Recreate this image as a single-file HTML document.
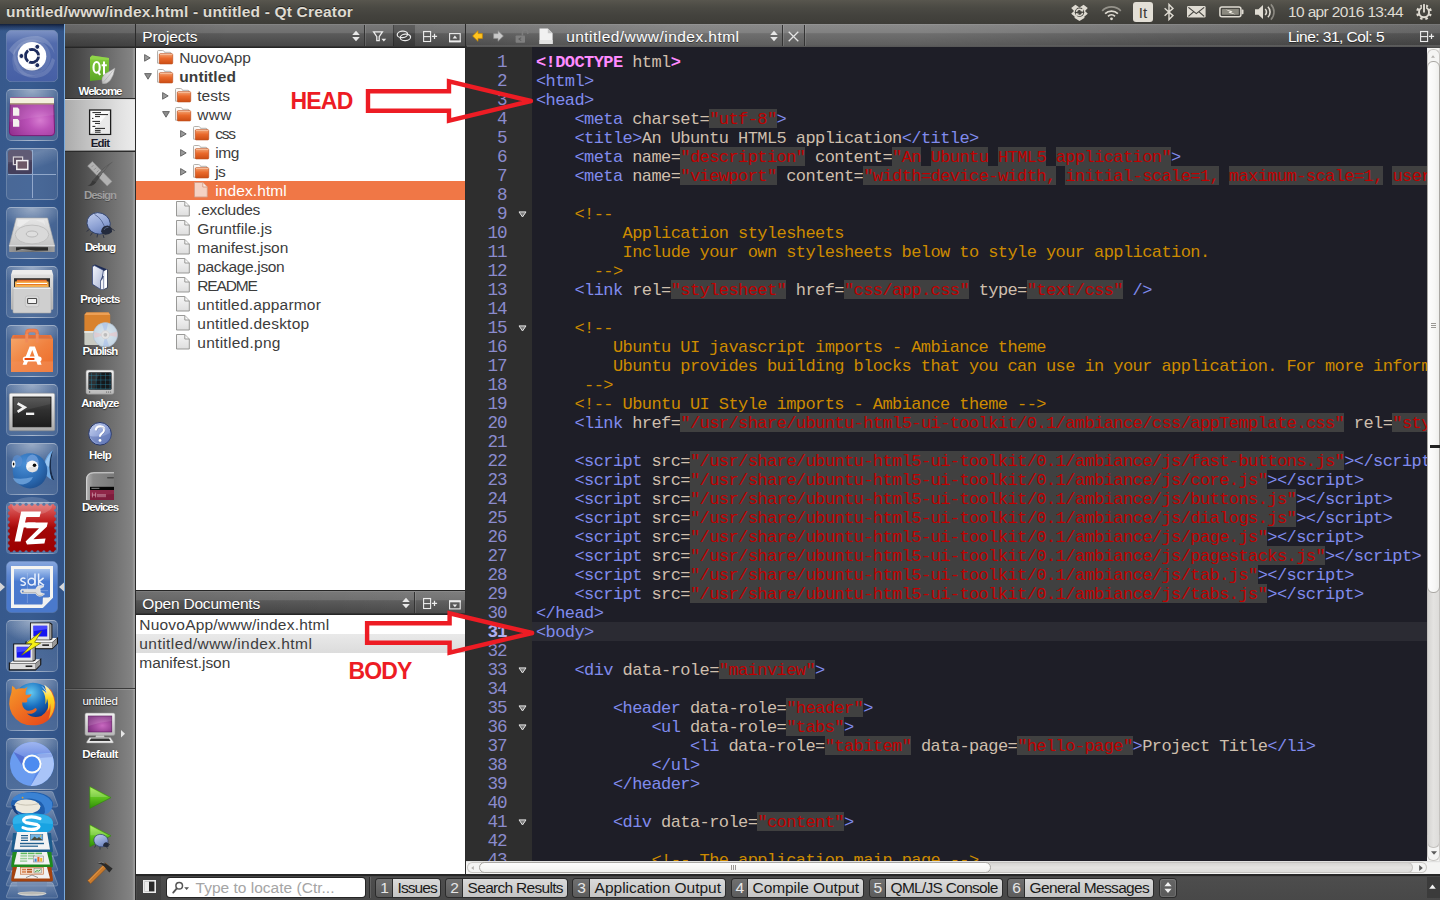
<!DOCTYPE html>
<html><head><meta charset="utf-8"><title>Qt Creator</title>
<style>

html,body{margin:0;padding:0;}
body{width:1440px;height:900px;overflow:hidden;position:relative;background:#1e1e27;font-family:"Liberation Sans",sans-serif;}
.abs{position:absolute;}
.t{position:absolute;white-space:pre;line-height:1;font-family:"Liberation Sans",sans-serif;}
svg{position:absolute;overflow:visible;}
/* top panel */
#panel{position:absolute;left:0;top:0;width:1440px;height:24px;background:linear-gradient(#58564e 0,#4b4a44 30%,#43423d 65%,#3e3d38 100%);}
/* launcher */
#launcher{position:absolute;left:0;top:24px;width:64px;height:876px;background:linear-gradient(90deg,#37598c 0,#385b8f 45%,#34568a 80%,#315285 100%);}
#launcher:before{content:"";position:absolute;left:0;top:0;width:64px;height:7px;background:linear-gradient(rgba(16,28,54,.95),rgba(20,36,70,.55) 40%,rgba(30,50,90,0));}
#lline{position:absolute;left:64px;top:24px;width:1px;height:876px;background:#79aadd;}
.tile{position:absolute;left:6px;width:52px;height:52px;border-radius:5px;box-sizing:border-box;
  background:radial-gradient(ellipse 62% 42% at 50% 0%,rgba(255,255,255,.42),rgba(255,255,255,.10) 75%,rgba(255,255,255,0) 100%),linear-gradient(rgba(255,255,255,.13) 0,rgba(255,255,255,.09) 40%,rgba(255,255,255,.12) 100%);
  border:1px solid rgba(255,255,255,.17);border-top-color:rgba(255,255,255,.45);}
/* qt toolbars */
.tb{position:absolute;height:24px;top:24px;background:linear-gradient(#8c8c8c 0,#787878 5%,#6f6f6f 38%,#5b5b5b 40%,#474747 92%,#262626 95%,#262626 100%);}
.tbsep{position:absolute;top:25px;width:1px;height:21px;background:#333;box-shadow:1px 0 0 rgba(255,255,255,.12);}

#code .ln{position:absolute;left:0;width:39.7px;height:19px;line-height:19px;text-align:right;font-family:"Liberation Mono",monospace;font-size:17.6px;letter-spacing:-0.94px;color:#8b8bcd;white-space:pre;padding-top:1.1px;box-sizing:border-box;}
#code .cl{position:absolute;left:69px;height:19px;line-height:19px;font-family:"Liberation Mono",monospace;font-size:17px;letter-spacing:-0.58px;color:#cfbfad;white-space:pre;}
#code .cl span{display:inline-block;height:19px;line-height:21px;vertical-align:top;}
#code .cl span.s{background:#404040;color:#c00000;}

</style></head>
<body>
<div id="panel"></div>
<span class="t" style="left:6.00px;top:3.88px;font-size:15.5px;font-weight:700;color:#dfdbd2;letter-spacing:0.183px;text-shadow:0 -1px 0 rgba(0,0,0,.5);">untitled/www/index.html - untitled - Qt Creator</span>
<svg style="left:1069.5px;top:4px" width="19" height="18" viewBox="0 0 19 18">
<path d="M1.2 4 L5.4 0.8 L9.5 3.4 L13.6 0.8 L17.8 4 L15 6.9 L17.8 9.8 L14.4 12.4 L14.4 14 L9.5 16.9 L4.6 14 L4.6 12.4 L1.2 9.8 L4 6.9Z" fill="#dfdbd2"/>
<circle cx="9.5" cy="8.3" r="4.7" fill="#45443f"/>
<path d="M6.4 7.8 A3.2 3.2 0 0 1 11.9 6.2" fill="none" stroke="#dfdbd2" stroke-width="1.5"/><path d="M13.3 4.3 L13.1 7.7 L10 6.9Z" fill="#dfdbd2"/>
<path d="M12.6 8.9 A3.2 3.2 0 0 1 7.1 10.5" fill="none" stroke="#dfdbd2" stroke-width="1.5"/><path d="M5.7 12.4 L5.9 9 L9 9.8Z" fill="#dfdbd2"/>
</svg>
<svg style="left:1101px;top:4px" width="21" height="17" viewBox="0 0 21 17" fill="none" stroke="#dfdbd2" stroke-linecap="butt">
<path d="M1.2 6.8 A13 13 0 0 1 19.8 6.8" stroke-width="1.7" opacity=".5"/>
<path d="M4.1 9.7 A9 9 0 0 1 16.9 9.7" stroke-width="1.7"/>
<path d="M7 12.4 A5 5 0 0 1 14 12.4" stroke-width="1.7"/>
<circle cx="10.5" cy="14.8" r="1.4" fill="#dfdbd2" stroke="none"/></svg>
<div class="abs" style="left:1133px;top:2px;width:20px;height:20px;border-radius:3px;background:#e3dfd6;"></div>
<span class="t" style="left:1138.83px;top:4.80px;font-size:15px;font-weight:400;color:#3c3b37;letter-spacing:0.000px;">It</span>
<svg style="left:1162px;top:3px" width="14" height="18" viewBox="0 0 14 18" fill="none" stroke="#dfdbd2" stroke-width="1.4" stroke-linejoin="miter">
<path d="M2.6 5.2 L11 12.6 L7 16.6 L7 1.4 L11 5.4 L2.6 12.8"/></svg>
<svg style="left:1187px;top:6px" width="19" height="12" viewBox="0 0 19 12">
<rect x="0" y="0" width="18.6" height="11.6" rx="1.3" fill="#dfdbd2"/>
<path d="M1.4 1.4 L9.3 7.6 L17.2 1.4 M1.4 10.4 L6.8 5.6 M17.2 10.4 L11.8 5.6" stroke="#45443f" stroke-width="1.2" fill="none"/></svg>
<svg style="left:1218.6px;top:6px" width="26" height="12" viewBox="0 0 26 12">
<rect x=".9" y=".9" width="21" height="9.9" rx="2" fill="none" stroke="#dfdbd2" stroke-width="1.5"/>
<rect x="22.6" y="3.4" width="1.9" height="4.9" rx=".7" fill="#dfdbd2"/>
<rect x="3" y="3" width="16.8" height="5.7" rx=".5" fill="#8b897f"/>
<path d="M6.6 3.4 L13.6 5.3 L12 6.2 L16.6 8.4 L9.4 6.7 L11 5.7Z" fill="#f2eee4"/></svg>
<svg style="left:1254px;top:3px" width="22" height="18" viewBox="0 0 22 18" fill="none" stroke="#dfdbd2">
<path d="M1 6.2 L4.4 6.2 L9 2 L9 16 L4.4 11.8 L1 11.8Z" fill="#dfdbd2" stroke="none"/>
<path d="M11.2 6 A4.2 4.2 0 0 1 11.2 12" stroke-width="1.6"/>
<path d="M13.9 3.8 A7.3 7.3 0 0 1 13.9 14.2" stroke-width="1.6"/>
<path d="M16.8 1.4 A10.6 10.6 0 0 1 16.8 16.6" stroke-width="1.6" opacity=".45"/></svg>
<span class="t" style="left:1288.00px;top:3.88px;font-size:15.5px;font-weight:400;color:#dfdbd2;letter-spacing:-0.638px;">10 apr 2016 13:44</span>
<svg style="left:1415px;top:3px" width="18" height="18" viewBox="0 0 18 18" fill="none" stroke="#dfdbd2">
<circle cx="9" cy="9.2" r="6.7" stroke-width="2.4" stroke-dasharray="2.5 2.76" stroke-dashoffset="1.25" transform="rotate(22.5 9 9.2)"/>
<circle cx="9" cy="9.2" r="5" stroke-width="1.9"/>
<rect x="6.9" y="0" width="4.2" height="7.4" fill="#46453f" stroke="none"/>
<path d="M9 1.6 L9 8.8" stroke-width="1.9" stroke-linecap="round"/></svg>
<div id="launcher"></div><div id="lline"></div>
<svg width="0" height="0" style="left:0;top:0"><defs>
<radialGradient id="gDesk" cx=".68" cy=".6" r=".75"><stop offset="0" stop-color="#d67bd0"/><stop offset=".35" stop-color="#bb52b8"/><stop offset="1" stop-color="#92308f"/></radialGradient>
<linearGradient id="gDash" x1="0" y1="0" x2="0" y2="1"><stop offset="0" stop-color="#7d92c4"/><stop offset=".25" stop-color="#526bac"/><stop offset="1" stop-color="#465fa5"/></linearGradient>
<linearGradient id="gHD" x1="0" y1="0" x2="0" y2="1"><stop offset="0" stop-color="#e6e6e6"/><stop offset="1" stop-color="#c4c4c4"/></linearGradient>
<linearGradient id="gHDf" x1="0" y1="0" x2="1" y2="0"><stop offset="0" stop-color="#9a9a9a"/><stop offset=".5" stop-color="#6e6e6e"/><stop offset="1" stop-color="#a0a0a0"/></linearGradient>
<linearGradient id="gCab" x1="0" y1="0" x2="0" y2="1"><stop offset="0" stop-color="#dedede"/><stop offset="1" stop-color="#b4b4b4"/></linearGradient>
<linearGradient id="gBag" x1="0" y1="0" x2="1" y2="1"><stop offset="0" stop-color="#f5a468"/><stop offset=".5" stop-color="#f0813f"/><stop offset="1" stop-color="#ed6a28"/></linearGradient>
<linearGradient id="gTermF" x1="0" y1="0" x2="0" y2="1"><stop offset="0" stop-color="#f4f4f4"/><stop offset="1" stop-color="#a9a9a9"/></linearGradient>
<linearGradient id="gTerm" x1="0" y1="0" x2="0" y2="1"><stop offset="0" stop-color="#4e4e4e"/><stop offset=".45" stop-color="#303030"/><stop offset="1" stop-color="#1c1c1c"/></linearGradient>
<radialGradient id="gFish" cx=".35" cy=".3" r=".8"><stop offset="0" stop-color="#4a8fd6"/><stop offset=".6" stop-color="#2c6cb4"/><stop offset="1" stop-color="#1d4d8c"/></radialGradient>
<linearGradient id="gFz" x1="0" y1="0" x2="0" y2="1"><stop offset="0" stop-color="#e06a6a"/><stop offset=".35" stop-color="#bf1f1f"/><stop offset=".5" stop-color="#a30808"/><stop offset="1" stop-color="#9c0000"/></linearGradient>
<linearGradient id="gSdk" x1="0" y1="0" x2="0" y2="1"><stop offset="0" stop-color="#a8c4ee"/><stop offset=".35" stop-color="#4a7bd0"/><stop offset="1" stop-color="#4a78cc"/></linearGradient>
<radialGradient id="gFfG" cx=".45" cy=".25" r=".7"><stop offset="0" stop-color="#63c8f0"/><stop offset=".5" stop-color="#1a6fc0"/><stop offset="1" stop-color="#0a2f7a"/></radialGradient>
<linearGradient id="gFfF" x1="0" y1="0" x2="1" y2="1"><stop offset="0" stop-color="#f59a2a"/><stop offset=".5" stop-color="#ee6a20"/><stop offset="1" stop-color="#e2401a"/></linearGradient>
<linearGradient id="gFfY" x1="0" y1="0" x2="0" y2="1"><stop offset="0" stop-color="#fff8d0"/><stop offset=".4" stop-color="#ffd820"/><stop offset="1" stop-color="#f59a2a"/></linearGradient>
<linearGradient id="gCrT" x1="0" y1="0" x2="0" y2="1"><stop offset="0" stop-color="#9fb6f0"/><stop offset="1" stop-color="#5c7fe0"/></linearGradient>
<linearGradient id="gSdkTop" x1="0" y1="0" x2="0" y2="1"><stop offset="0" stop-color="#fff" stop-opacity=".34"/><stop offset=".55" stop-color="#fff" stop-opacity=".10"/><stop offset="1" stop-color="#fff" stop-opacity="0"/></linearGradient><linearGradient id="gStk" x1="0" y1="0" x2="0" y2="1"><stop offset="0" stop-color="rgba(255,255,255,.30)"/><stop offset="1" stop-color="rgba(255,255,255,.08)"/></linearGradient>
</defs></svg>
<div class="tile " style="top:30px;background:none;border-color:rgba(255,255,255,.28);"><svg style="left:-1px;top:-1px" width="52" height="52" viewBox="0 0 52 52"><rect x=".5" y=".5" width="51" height="51" rx="5" fill="url(#gDash)"/>
<path d="M3 20 Q12 5 32 6 Q46 9 48.6 24 Q44 12 30 11.4 Q14 12 7.6 25 Z" fill="#fff" opacity=".17"/>
<path d="M49 30 Q46 46 30 48 Q15 48.4 9.6 36 Q15 44.6 28 44.4 Q42 43 46 28Z" fill="#fff" opacity=".15"/>
<path d="M8 40 Q4 28 9 18 Q8.6 30 15 39 Q22 46 30 45.6 Q18 49 8 40Z" fill="#fff" opacity=".10"/>
<ellipse cx="26" cy="27" rx="18.6" ry="17.6" fill="#fff" opacity=".12"/>
<circle cx="26" cy="26.2" r="14.3" fill="#fff"/>
<ellipse cx="26" cy="39.6" rx="10" ry="1.6" fill="#000" opacity=".07"/>
<circle cx="26" cy="26" r="6.5" fill="none" stroke="#1d2c5e" stroke-width="3"/>
<g stroke="#fff" stroke-width="1.2"><path d="M26 26 L35.6 26"/><path d="M26 26 L21.2 17.7"/><path d="M26 26 L21.2 34.3"/></g>
<circle cx="26" cy="26" r="4.9" fill="#fff"/>
<g fill="#1d2c5e" stroke="#fff" stroke-width="1"><circle cx="15.4" cy="26" r="2.5"/><circle cx="31.3" cy="16.8" r="2.5"/><circle cx="31.3" cy="35.2" r="2.5"/></g></svg></div>
<div class="tile " style="top:89px;"><svg style="left:-1px;top:-1px" width="52" height="52" viewBox="0 0 52 52"><path d="M4.5 9.5 Q4.5 8.7 5.3 8.7 L46.7 8.7 Q47.5 8.7 47.5 9.5 L48.6 43 Q48.6 46.6 45 46.6 L7 46.6 Q3.4 46.6 3.4 43Z" fill="url(#gDesk)" stroke="#7a1570" stroke-width=".9"/>
<path d="M4 15.5 L48 15.5 L48.3 26 Q26 28 3.7 33Z" fill="#fff" opacity=".08"/>
<path d="M4 9.6 Q4 8.8 4.8 8.8 L47.2 8.8 Q48 8.8 48 9.6 L48 14.6 L4 14.6Z" fill="#f3f1dc"/>
<path d="M4 14.2 L48 14.2 L48 15.4 L4 15.4Z" fill="#a7a170"/>
<path d="M7 18.6 L11.6 18.6 L13.3 20.3 L13.3 26.8 L7 26.8Z M7 30 L11.6 30 L13.3 31.7 L13.3 37.8 L7 37.8Z" fill="#f4f1ee"/></svg></div>
<div class="tile " style="top:148px;background:linear-gradient(160deg,rgba(255,255,255,.16) 0,rgba(255,255,255,.26) 22%,rgba(255,255,255,.09) 45%,rgba(255,255,255,.09) 100%);"><svg style="left:-1px;top:-1px" width="52" height="52" viewBox="0 0 52 52"><rect x="2" y="2" width="24" height="24" rx="3" fill="#4a4562"/>
<path d="M2 5 Q2 2 5 2 L26 2 L26 12 Q14 12 2 16Z" fill="#fff" opacity=".12"/>
<rect x="2" y="14" width="24" height="12" fill="#3f3a58" opacity=".55"/>
<path d="M26.5 2 L26.5 50 M2 26.5 L50 26.5" stroke="#9fb4d4" stroke-width="1" opacity=".85"/>
<rect x="7.4" y="9" width="9.2" height="7.6" fill="#5c5064" stroke="#d8d4da" stroke-width="1.2"/>
<rect x="10.8" y="12.6" width="11" height="8.8" fill="#6d5866" stroke="#f3f1f3" stroke-width="1.5"/></svg></div>
<div class="tile " style="top:207px;"><svg style="left:-1px;top:-1px" width="52" height="52" viewBox="0 0 52 52"><path d="M10.3 11 L41.6 11 L48.7 38.8 L3.2 38.8Z" fill="url(#gHD)" stroke="#a8a8a8" stroke-width=".6"/>
<path d="M3.2 38.8 L48.7 38.8 L48.7 44.4 Q48.7 45 48 45 L4 45 Q3.2 45 3.2 44.4Z" fill="url(#gHDf)"/>
<path d="M3.2 38.8 L48.7 38.8" stroke="#f4f4f4" stroke-width="1"/>
<path d="M10 40.2 L42 40.2 L42 43.6 L10 43.6Z" fill="#2a2a2a"/><path d="M10 43.6 L16 42.2 L30 43.6Z" fill="#bdbdbd"/>
<ellipse cx="26" cy="27.5" rx="16.8" ry="9.4" fill="#d9d9d9" stroke="#b9b9b9" stroke-width=".8"/>
<ellipse cx="26" cy="27" rx="5.8" ry="3" fill="#dedede" stroke="#b0b0b0" stroke-width=".8"/>
<path d="M12 13 L24 13 L14 20 L11 19Z" fill="#efefef" opacity=".8"/><path d="M29 13 L38 13 L39.5 19 L37 16Z" fill="#efefef" opacity=".5"/></svg></div>
<div class="tile " style="top:266px;"><svg style="left:-1px;top:-1px" width="52" height="52" viewBox="0 0 52 52"><path d="M6.6 4 L45.8 4 L47.2 9 L5 9Z" fill="#ececec"/>
<rect x="5" y="8.6" width="42.2" height="35.2" rx="1" fill="url(#gCab)"/>
<rect x="8" y="12.2" width="36" height="9" fill="#2e2e2e"/>
<path d="M11 13.8 L40.6 13.8 L41.8 21.2 L9.4 21.2Z" fill="#e8702e"/>
<path d="M9 15.6 L42.4 15.6 L42.8 21.2 L9 21.2Z" fill="#f6b04e"/>
<path d="M10.6 17 L41 17 L41 18 L10.6 18Z" fill="#fff"/><path d="M10.6 18 L41 18 L41 18.8 L10.6 18.8Z" fill="#e26a20"/>
<rect x="7" y="21.4" width="38" height="25.6" rx="1" fill="#cfcfcf"/>
<path d="M7 21.4 L45 21.4 L45 23 L7 23Z" fill="#ededed"/>
<rect x="7" y="21.4" width="38" height="25.6" rx="1" fill="none" stroke="#a9a9a9" stroke-width=".6"/>
<rect x="19.3" y="30" width="13.6" height="10.8" rx="2" fill="#d9d9d9" stroke="#bdbdbd" stroke-width=".8"/>
<rect x="21.6" y="32.5" width="9" height="5" rx=".8" fill="#f4f4f4" stroke="#4c4c4c" stroke-width="1.1"/></svg></div>
<div class="tile " style="top:325px;"><svg style="left:-1px;top:-1px" width="52" height="52" viewBox="0 0 52 52"><path d="M19.3 17.6 L19.3 8 Q19.3 4 23 4 L29 4 Q32.6 4 32.6 8 L32.6 17.6 L29.8 17.6 L29.8 9 Q29.8 7 28 7 L24 7 Q22.2 7 22.2 9 L22.2 17.6Z" fill="#ee8250" stroke="#e06a38" stroke-width=".5"/>
<path d="M6.8 10 L45 10 L47 13.8 L5 13.8Z" fill="#e9783f"/>
<path d="M8.6 10.6 L43.4 10.6 L44.6 13.6 L7.4 13.6Z" fill="#d8693a" opacity=".6"/>
<rect x="5" y="13.6" width="42" height="33.4" fill="url(#gBag)"/>
<rect x="5" y="36.4" width="42" height="10.6" fill="#f3905a" opacity=".55"/>
<path d="M22.2 9 L22.2 17.6 L19.3 17.6 L19.3 9Z M32.6 9 L32.6 17.6 L29.8 17.6 L29.8 9Z" fill="#f08a58"/>
<path d="M26.3 21.6 L23.6 21.6 L16.6 39.8 L20.6 39.8 L26.3 25 L31.6 39.8 L35.6 39.8 L28.9 21.6Z" fill="#fff"/>
<rect x="16.8" y="31.4" width="18.8" height="5" rx="2.5" fill="#fff"/>
<rect x="18.4" y="32.9" width="10.2" height="2" rx="1" fill="#e8460a"/></svg></div>
<div class="tile " style="top:384px;"><svg style="left:-1px;top:-1px" width="52" height="52" viewBox="0 0 52 52"><rect x="3.2" y="9.2" width="45.6" height="37.6" rx="1.6" fill="url(#gTermF)" stroke="#8a8a8a" stroke-width=".5"/>
<rect x="7" y="13" width="38" height="29.8" fill="url(#gTerm)" stroke="#111" stroke-width=".8"/>
<path d="M7.4 13.4 L44.6 13.4 L44.6 20 Q26 24 7.4 30Z" fill="#fff" opacity=".07"/>
<path d="M11.6 19.4 L18.6 23.4 L11.6 27.8" fill="none" stroke="#f2f2f2" stroke-width="2.7" stroke-linejoin="miter"/>
<rect x="20" y="28.6" width="8.2" height="2.4" fill="#f2f2f2"/></svg></div>
<div class="tile " style="top:443px;"><svg style="left:-1px;top:-1px" width="52" height="52" viewBox="0 0 52 52"><path d="M38 19.5 Q42 10 47 7 Q44.8 16 45 24 Q45.6 32 48.4 37.4 Q44 36.8 40.6 33 Z" fill="#6fa9e4"/>
<path d="M47 7 Q44.8 16 45 24 Q45.6 32 48.4 37.4 Q46.4 37 45.6 36 Q43.4 30 43.4 24 Q43.6 14 47 7Z" fill="#1a2c4a"/>
<path d="M38.4 21 Q41 15 44.4 10.4 Q43 18 43 24Z" fill="#a5cdf4" opacity=".8"/>
<ellipse cx="24" cy="27.8" rx="17.3" ry="17.6" fill="url(#gFish)"/>
<ellipse cx="26.4" cy="20.6" rx="6.4" ry="9.2" fill="#6c9bd8" opacity=".9"/>
<ellipse cx="11.4" cy="18" rx="5" ry="6" fill="#5a8fd2" opacity=".7"/>
<path d="M6.8 35 Q16 36.8 27 34 Q24.6 40 17 41.6 Q10 41.6 6.8 35Z" fill="#6ea3dc" opacity=".85"/>
<ellipse cx="26.2" cy="23.4" rx="6.1" ry="5.9" fill="#f8f8f8"/><ellipse cx="26.6" cy="26.4" rx="5" ry="2.6" fill="#c8c8c8" opacity=".45"/>
<circle cx="28.5" cy="22.2" r="1.8" fill="#0a0a0a"/>
<ellipse cx="7.6" cy="21.2" rx="1.8" ry="3.6" fill="#f4f4f4"/><ellipse cx="7.6" cy="21" rx=".8" ry="1.6" fill="#0a0a0a"/></svg></div>
<div class="tile " style="top:502px;"><svg style="left:-1px;top:-1px" width="52" height="52" viewBox="0 0 52 52"><rect x="2.2" y="2.2" width="47.6" height="47.6" fill="url(#gFz)"/><ellipse cx="26" cy="4" rx="20" ry="9" fill="#fff" opacity=".16"/><circle cx="2.2" cy="2.2" r="1.55" fill="#5878a6"/><circle cx="2.2" cy="49.8" r="1.55" fill="#5878a6"/><circle cx="2.2" cy="2.2" r="1.55" fill="#5878a6"/><circle cx="49.8" cy="2.2" r="1.55" fill="#5878a6"/><circle cx="8.2" cy="2.2" r="1.55" fill="#5878a6"/><circle cx="8.2" cy="49.8" r="1.55" fill="#5878a6"/><circle cx="2.2" cy="8.2" r="1.55" fill="#5878a6"/><circle cx="49.8" cy="8.2" r="1.55" fill="#5878a6"/><circle cx="14.1" cy="2.2" r="1.55" fill="#5878a6"/><circle cx="14.1" cy="49.8" r="1.55" fill="#5878a6"/><circle cx="2.2" cy="14.1" r="1.55" fill="#5878a6"/><circle cx="49.8" cy="14.1" r="1.55" fill="#5878a6"/><circle cx="20.1" cy="2.2" r="1.55" fill="#5878a6"/><circle cx="20.1" cy="49.8" r="1.55" fill="#5878a6"/><circle cx="2.2" cy="20.1" r="1.55" fill="#5878a6"/><circle cx="49.8" cy="20.1" r="1.55" fill="#5878a6"/><circle cx="26.0" cy="2.2" r="1.55" fill="#5878a6"/><circle cx="26.0" cy="49.8" r="1.55" fill="#5878a6"/><circle cx="2.2" cy="26.0" r="1.55" fill="#5878a6"/><circle cx="49.8" cy="26.0" r="1.55" fill="#5878a6"/><circle cx="31.9" cy="2.2" r="1.55" fill="#5878a6"/><circle cx="31.9" cy="49.8" r="1.55" fill="#5878a6"/><circle cx="2.2" cy="31.9" r="1.55" fill="#5878a6"/><circle cx="49.8" cy="31.9" r="1.55" fill="#5878a6"/><circle cx="37.9" cy="2.2" r="1.55" fill="#5878a6"/><circle cx="37.9" cy="49.8" r="1.55" fill="#5878a6"/><circle cx="2.2" cy="37.9" r="1.55" fill="#5878a6"/><circle cx="49.8" cy="37.9" r="1.55" fill="#5878a6"/><circle cx="43.9" cy="2.2" r="1.55" fill="#5878a6"/><circle cx="43.9" cy="49.8" r="1.55" fill="#5878a6"/><circle cx="2.2" cy="43.9" r="1.55" fill="#5878a6"/><circle cx="49.8" cy="43.9" r="1.55" fill="#5878a6"/><circle cx="49.8" cy="2.2" r="1.55" fill="#5878a6"/><circle cx="49.8" cy="49.8" r="1.55" fill="#5878a6"/><circle cx="2.2" cy="49.8" r="1.55" fill="#5878a6"/><circle cx="49.8" cy="49.8" r="1.55" fill="#5878a6"/><path d="M15.2 9.6 L35 9.6 L33.6 15 L20.4 15 L19 20.6 L29.6 20.6 L28.4 25.6 L17.8 25.6 L14.6 39.4 L8.6 39.4Z" fill="#fff"/>
<path d="M21.4 20.6 L41.8 20.6 L40.8 24.8 L27.4 37.2 L39.6 36.4 L38.4 41.6 L21 42.6 L19.6 39.4 L33 26.2 L20.2 26.2Z" fill="#fff"/></svg></div>
<div class="tile " style="top:561px;background:none;border-color:rgba(255,255,255,.15);"><svg style="left:-1px;top:-1px" width="52" height="52" viewBox="0 0 52 52"><rect x=".5" y=".5" width="51" height="51" rx="5" fill="#4a79cc"/>
<rect x=".5" y=".5" width="51" height="26" rx="5" fill="url(#gSdkTop)"/>
<path d="M5 5 L47 5 L47 36.6 L36.6 47 L5 47Z" fill="#f4f4f2"/>
<path d="M8 8 L44 8 L44 35.6 L36 43.6 L8 43.6Z" fill="url(#gSdk)"/>
<path d="M36.6 47 L37 36.4 L47 36.6Z" fill="#e2e2e0"/><path d="M36.6 47 L36.8 37 L47 36.6Z" fill="#fff" opacity=".5"/>
<path d="M21.4 12 L21.4 42 M14 29.6 L42 29.6" stroke="#fff" stroke-width=".6" opacity=".35"/>
<g fill="none" stroke="#e9f0fc" stroke-width="1.5"><path d="M19.4 17.6 Q17 16.2 15.2 17.8 Q14 19.8 17 20.6 Q20.2 21.6 19 23.6 Q17 25 14.6 23.6"/>
<circle cx="25.6" cy="20.6" r="3.4"/><path d="M29 12.6 L29 24.4"/><path d="M32.6 12.6 L32.6 24.4 M37.6 16.8 L33 20.6 L38 24.4"/></g>
<path d="M15.6 28.2 L29.6 28.2 Q30.6 24.6 35 24.4 Q37 24.6 38 25.6 L34 27.6 L34.4 31.6 L38.6 33 Q36.4 35.6 33 35.2 Q30.2 34.4 29.6 32.4 L15.6 32.4 Q13.2 30.4 15.6 28.2Z" fill="#dedede" stroke="#f8f8f8" stroke-width=".5"/>
<path d="M16 31.6 L29.8 31.6 Q30.6 34 33 34.6 Q35.6 34.8 37.4 33.4" fill="none" stroke="#a8a8a8" stroke-width=".7"/>
<circle cx="16.8" cy="30.3" r=".9" fill="#4a79cc"/></svg></div>
<svg style="left:0;top:582px" width="6" height="10" viewBox="0 0 6 10"><path d="M0 0.6 L5 5 L0 9.4Z" fill="#d6d6d6"/></svg>
<svg style="left:58px;top:582px" width="6" height="10" viewBox="0 0 6 10"><path d="M6 0.6 L1 5 L6 9.4Z" fill="#d6d6d6"/></svg>
<div class="tile " style="top:620px;"><svg style="left:-1px;top:-1px" width="52" height="52" viewBox="0 0 52 52"><g transform="translate(19.5 2.4) scale(1.12)">
<path d="M0 17 L24 17 L29 13 L29 19 L24 24 L0 24Z" fill="#111"/>
<path d="M1 17.4 L24 17.4 L28 14 L6 14Z" fill="#f4f4f4"/><path d="M1 17.8 L24 17.8 L24 23 L1 23Z" fill="#dcdcdc"/><path d="M24 17.8 L28 14.4 L28 19 L24 23Z" fill="#9a9a9a"/>
<rect x="15" y="19.6" width="6" height="1.4" fill="#222"/>
<path d="M4 0 L22 0 L24 1.4 L24 15 L22 16 L4 16Z" fill="#111"/>
<rect x="4.8" y=".8" width="16.6" height="14.6" fill="#e6e6e6"/><path d="M21.4 .8 L23.2 2 L23.2 14.6 L21.4 15.4Z" fill="#9c9c9c"/>
<rect x="7" y="3" width="12.4" height="9.6" fill="#1414f0"/><path d="M7 3 L19.4 3 L19.4 6 L7 8Z" fill="#5a5aff" opacity=".7"/>
</g><g transform="translate(2.8 23.5) scale(1.12)">
<path d="M0 17 L24 17 L29 13 L29 19 L24 24 L0 24Z" fill="#111"/>
<path d="M1 17.4 L24 17.4 L28 14 L6 14Z" fill="#f4f4f4"/><path d="M1 17.8 L24 17.8 L24 23 L1 23Z" fill="#dcdcdc"/><path d="M24 17.8 L28 14.4 L28 19 L24 23Z" fill="#9a9a9a"/>
<rect x="15" y="19.6" width="6" height="1.4" fill="#222"/>
<path d="M4 0 L22 0 L24 1.4 L24 15 L22 16 L4 16Z" fill="#111"/>
<rect x="4.8" y=".8" width="16.6" height="14.6" fill="#e6e6e6"/><path d="M21.4 .8 L23.2 2 L23.2 14.6 L21.4 15.4Z" fill="#9c9c9c"/>
<rect x="7" y="3" width="12.4" height="9.6" fill="#1414f0"/><path d="M7 3 L19.4 3 L19.4 6 L7 8Z" fill="#5a5aff" opacity=".7"/>
</g><path transform="translate(1 1.8)" d="M34.6 9.4 L19 21.6 L25 22 L14.6 33.4 L33.6 21.4 L27.6 20.4Z" fill="#f6f014" stroke="#6a6a00" stroke-width=".7"/></svg></div>
<div class="tile " style="top:679px;"><svg style="left:-1px;top:-1px" width="52" height="52" viewBox="0 0 52 52"><g transform="translate(-0.8 -2.2) scale(1.03)"><circle cx="27" cy="25" r="19.2" fill="url(#gFfG)"/>
<path d="M44 12 Q49.6 20 48.4 30 Q45 45 30 47 Q14 48.4 6.6 36 Q1.6 26 6 15.4 L6.8 8.6 Q9.4 10 10.4 12.4 Q14 10.8 19 11.4 Q22.4 9.4 22 9.6 Q19 14 20 17.6 L25.6 17 Q25 19.6 21.6 20.8 Q21 23 21.4 24.4 Q18.4 25.6 16.6 24.6 Q16 30 21 32.8 Q26 33.6 29.4 30.4 Q31.4 31 30.4 32.6 Q27 37 21 35.6 Q27 41 35 38 Q43 33 42.6 22 Q42 16 38.6 10.6Z" fill="url(#gFfF)"/>
<path d="M38 7.6 Q46.6 13 48 25 Q48 35 42 41 Q45 33 43.6 26 Q43.8 30 41 34 Q42.6 26 40.6 21 Q40.4 25 39 27 Q40 18 35.6 12.6 Q38.6 13.6 40 16 Q39.6 11 38 7.6Z" fill="url(#gFfY)"/>
<path d="M35 8.6 Q39.4 11.4 41 17 Q38.6 12.6 35 8.6Z" fill="#fff" opacity=".8"/></g></svg></div>
<div class="tile " style="top:738px;"><svg style="left:-1px;top:-1px" width="52" height="52" viewBox="0 0 52 52"><circle cx="26" cy="26" r="22" fill="#6a9cf0"/>
<path d="M7.6 14 A22 22 0 0 1 45 15 L26 15.6 Q19 17 16.4 25 Z" fill="url(#gCrT)"/>
<path d="M45 15 A22 22 0 0 1 24.6 48 L34.4 31.6 Q37.6 24 31 16Z" fill="#a9c4f8"/>
<path d="M30 16 L45 15.4 Q46 17 46.6 19 L34 20Z" fill="#8aa4e6" opacity=".8"/>
<path d="M7.6 14 L16.2 27.6 Q15.6 22 18.6 19Z" fill="#4c66cc" opacity=".75"/>
<path d="M24.6 48 L29.6 35.4 Q32 35 33.6 33Z" fill="#5a86e6" opacity=".8"/>
<circle cx="26" cy="26" r="9.6" fill="#fdfdf8"/><circle cx="26" cy="26" r="7.6" fill="#4c8bf0"/></svg></div>
<svg style="left:0;top:0" width="66" height="900" viewBox="0 0 66 900"><path d="M11 793 Q11 791.5 12.6 791.5 L51.4 791.5 Q53 791.5 53.2 793 L57.6 805 Q58 807 56 807 L8 807 Q6 807 6.4 805Z" fill="url(#gStk)" stroke="rgba(255,255,255,.28)" stroke-width=".8"/><path d="M11 811 Q11 809.5 12.6 809.5 L51.4 809.5 Q53 809.5 53.2 811 L57.6 823 Q58 825 56 825 L8 825 Q6 825 6.4 823Z" fill="url(#gStk)" stroke="rgba(255,255,255,.28)" stroke-width=".8"/><path d="M11 827 Q11 825.5 12.6 825.5 L51.4 825.5 Q53 825.5 53.2 827 L57.6 839 Q58 841 56 841 L8 841 Q6 841 6.4 839Z" fill="url(#gStk)" stroke="rgba(255,255,255,.28)" stroke-width=".8"/><path d="M11 842 Q11 840.5 12.6 840.5 L51.4 840.5 Q53 840.5 53.2 842 L57.6 854 Q58 856 56 856 L8 856 Q6 856 6.4 854Z" fill="url(#gStk)" stroke="rgba(255,255,255,.28)" stroke-width=".8"/><path d="M11 857 Q11 855.5 12.6 855.5 L51.4 855.5 Q53 855.5 53.2 857 L57.6 869 Q58 871 56 871 L8 871 Q6 871 6.4 869Z" fill="url(#gStk)" stroke="rgba(255,255,255,.28)" stroke-width=".8"/><path d="M11 872 Q11 870.5 12.6 870.5 L51.4 870.5 Q53 870.5 53.2 872 L57.6 884 Q58 886 56 886 L8 886 Q6 886 6.4 884Z" fill="url(#gStk)" stroke="rgba(255,255,255,.28)" stroke-width=".8"/><path d="M11 884 Q11 882.5 12.6 882.5 L51.4 882.5 Q53 882.5 53.2 884 L57.6 896 Q58 898 56 898 L8 898 Q6 898 6.4 896Z" fill="url(#gStk)" stroke="rgba(255,255,255,.28)" stroke-width=".8"/><ellipse cx="32" cy="804" rx="21" ry="12" fill="#1f5fae"/>
<path d="M12 800 Q16 792.6 30 792.6 Q46 793 52 802 Q54 812 44 815 Q47 808 41 802 Q33 797 24 799 Q17 801 12 800Z" fill="#3a82d4"/>
<path d="M14 806 Q16 799.6 25 799.6 Q36 799 40.6 806 Q40 813 27 813.6 Q16 813 14 806Z" fill="#ece8dc"/>
<path d="M16 803 Q24 807 39 803.6" stroke="#bdb8a8" stroke-width=".8" fill="none"/>
<path d="M12 805 Q13 814 20 815.6 Q15 811 15.4 806Z" fill="#163e7e"/>
<circle cx="22.6" cy="797.6" r=".9" fill="#e8a020"/><path d="M13 824 Q11 814.6 22 814 Q32 812 44 814.6 Q54 817 53 826 Q52 833 42 833.6 Q30 835 20 833 Q13 831 13 824Z" fill="#18a3e2"/>
<path d="M13 824 Q11 816 22 814.6 Q32 813 44 815 Q53 817 53 824 Q32 822 13 824Z" fill="#3fbaf0" opacity=".6"/>
<path d="M40 818.6 Q33 815.6 26 817.6 Q21 820 26 822.6 L37 824.6 Q41 826.6 37 828.6 Q30 830.6 23 827.6" fill="none" stroke="#fff" stroke-width="3.2" stroke-linecap="round"/><path d="M13 833 L51 833 L53 851 Q53 852.6 51 852.6 L13 852.6 Q11 852.6 11.2 851Z" fill="#1d5b8c"/>
<path d="M17 832 L47 832 L50 849.6 L14 849.6Z" fill="#f3f3f3"/>
<g fill="#21608f"><rect x="21" y="835" width="7" height="1.2"/><rect x="21" y="837.4" width="7" height="1.2"/><rect x="21" y="839.8" width="7" height="1.2"/><rect x="20" y="842.8" width="24" height="1.4"/><rect x="20" y="845.6" width="18" height="1.2"/></g>
<rect x="30.4" y="834.6" width="12.4" height="5.6" fill="#6fb4e6" stroke="#2a5c84" stroke-width=".5"/><path d="M31 840 L34.6 836.6 L37 838.6 L39 837 L42.4 840Z" fill="#4a4a3a"/><circle cx="40.6" cy="836" r=".8" fill="#f0c030"/><path d="M12.6 852 L51.4 852 L53 866 Q53 867.6 51 867.6 L13 867.6 Q11 867.6 11.2 866Z" fill="#1f8a1f"/>
<path d="M17 852 L47 852 L50 864.6 L14 864.6Z" fill="#f3f3f3"/>
<g fill="#5cb85c"><rect x="20.6" y="852.6" width="6.6" height="1.6"/><rect x="28" y="852.6" width="6.6" height="1.6"/><rect x="35.4" y="852.6" width="6.6" height="1.6"/>
<rect x="20.4" y="855.2" width="6.8" height="1.5" opacity=".6"/><rect x="28" y="855.2" width="6.8" height="1.5" opacity=".6"/>
<rect x="20.2" y="857.8" width="7" height="1.5" opacity=".6"/><rect x="28" y="857.8" width="5" height="1.5" opacity=".6"/><rect x="20" y="860.4" width="7.2" height="1.4" opacity=".6"/></g>
<rect x="33.4" y="856" width="10" height="6" fill="#e9e9e9" stroke="#777" stroke-width=".5"/><rect x="34.6" y="858.6" width="2" height="3" fill="#3a8ad8"/><rect x="37.4" y="857" width="2" height="4.6" fill="#e8682a"/><rect x="40.2" y="858" width="2" height="3.6" fill="#f0b82a"/><path d="M12.6 867 L51.4 867 L53 880 Q53 881.6 51 881.6 L13 881.6 Q11 881.6 11.2 880Z" fill="#a4420e"/>
<path d="M17 867 L47 867 L50 878.6 L14 878.6Z" fill="#f1f1f1"/>
<rect x="20.4" y="867.6" width="23" height="6.6" fill="#f5dccb" stroke="#c0652e" stroke-width=".6"/>
<rect x="22" y="868.8" width="4" height="1.5" fill="#d8814c"/><rect x="27" y="868.8" width="5" height="1.5" fill="#b5531c"/><rect x="22" y="871.2" width="4" height="1.5" fill="#d8814c"/><rect x="27" y="871.2" width="5" height="1.5" fill="#b5531c"/>
<rect x="34" y="868.6" width="7.4" height="4.4" fill="#dfe9d6" stroke="#666" stroke-width=".4"/><path d="M35 872 L37 870.6 L38.6 871.2 L40.6 869.6" stroke="#3a9a3a" stroke-width=".9" fill="none"/>
<path d="M26 877.6 L32 875 L38 877.6" stroke="#555" stroke-width=".6" fill="none"/><path d="M17 882 L47 882 L46 894 Q32 897.6 18 894Z" fill="#6f86ad" opacity=".55"/>
<ellipse cx="32" cy="893.6" rx="14.4" ry="2.2" fill="#d4d4d0"/><ellipse cx="32" cy="893.2" rx="13" ry="1.3" fill="#a8a8a4" opacity=".6"/></svg>
<div class="abs" style="left:65px;top:47px;width:70px;height:853px;background:linear-gradient(90deg,#3f3f3f 0,#4a4a4a 20%,#6a6a6a 60%,#848484 96%,#9a9a9a 98.6%,#9a9a9a 100%);"></div>
<div class="abs" style="left:65px;top:24px;width:70px;height:22px;background:rgba(0,0,0,.0);"></div>
<div class="abs" style="left:65px;top:98px;width:70px;height:1px;background:#2a2a2a;"></div>
<div class="abs" style="left:65px;top:99px;width:70px;height:52px;background:linear-gradient(90deg,#ababab 0,#c4c4c4 35%,#e2e2e2 80%,#ececec 100%);box-shadow:inset 0 1px 0 #d9d9d9, inset 0 -1px 0 #8a8a8a;"></div>
<div class="abs" style="left:65px;top:151px;width:70px;height:1px;background:#2a2a2a;"></div>
<svg width="0" height="0" style="left:0;top:0"><defs>
<linearGradient id="mQt" x1="0" y1="0" x2="0" y2="1"><stop offset="0" stop-color="#86cc3e"/><stop offset="1" stop-color="#5aa524"/></linearGradient>
<linearGradient id="mLeaf" x1="0" y1="1" x2="1" y2="0"><stop offset="0" stop-color="#bdbdbd"/><stop offset="1" stop-color="#f0f0f0"/></linearGradient>
<linearGradient id="mBug" x1="0" y1="0" x2="1" y2="1"><stop offset="0" stop-color="#c7d3f0"/><stop offset=".55" stop-color="#8ea2d4"/><stop offset="1" stop-color="#5c74b0"/></linearGradient>
<linearGradient id="mFold" x1="0" y1="0" x2="1" y2="1"><stop offset="0" stop-color="#f4f6fc"/><stop offset="1" stop-color="#a9b4d4"/></linearGradient>
<radialGradient id="mCd" cx=".5" cy=".5" r=".5"><stop offset="0" stop-color="#f8f8f8"/><stop offset=".2" stop-color="#d9e4ec"/><stop offset="1" stop-color="#c5d6e4"/></radialGradient>
<linearGradient id="mHelp" x1="0" y1="0" x2="1" y2="1"><stop offset="0" stop-color="#c9d4f0"/><stop offset=".5" stop-color="#93a5d8"/><stop offset="1" stop-color="#6178b8"/></linearGradient>
<linearGradient id="mRun" x1="0" y1="0" x2="0" y2="1"><stop offset="0" stop-color="#a6ec50"/><stop offset=".5" stop-color="#5fc21e"/><stop offset="1" stop-color="#2f8f08"/></linearGradient>
<radialGradient id="mScr" cx=".6" cy=".6" r=".7"><stop offset="0" stop-color="#c868c0"/><stop offset="1" stop-color="#7a2a7c"/></radialGradient>
<linearGradient id="mMon" x1="0" y1="0" x2="0" y2="1"><stop offset="0" stop-color="#f2f2f2"/><stop offset="1" stop-color="#b8b8b8"/></linearGradient>
<linearGradient id="mPh" x1="0" y1="0" x2="1" y2="0"><stop offset="0" stop-color="#b5b5b5"/><stop offset=".25" stop-color="#8a8a8a"/><stop offset="1" stop-color="#7a7a7a"/></linearGradient>
</defs></svg>
<svg style="left:65px;top:0" width="70" height="900" viewBox="65 0 70 900"><path d="M90 57.6 L92 55.6 L109 58 L109 79 L90 81Z" fill="url(#mQt)"/>
<path d="M90 57.6 L92 55.6 L109 58 L109 60 L90 59.6Z" fill="#9adf52" opacity=".6"/>
<ellipse cx="96.6" cy="67.4" rx="3.1" ry="5.4" fill="none" stroke="#fff" stroke-width="2.1"/><path d="M97.6 71.4 L100.2 75" stroke="#fff" stroke-width="2"/>
<path d="M104 61.6 L104 73.4 Q104 75 106.4 74.6 M101.6 65.2 L106.8 65.2" stroke="#fff" stroke-width="2" fill="none"/>
<path d="M102.4 83.4 Q100.6 77 105.6 73.6 Q111 70.6 115 68 Q113.8 75 110.6 80 Q107 84.6 102.4 83.4Z" fill="url(#mLeaf)" stroke="#9c9c9c" stroke-width=".5"/>
<path d="M103 82.6 Q108 77 114 69.4" stroke="#a8a8a8" stroke-width=".6" fill="none"/></svg>
<svg style="left:65px;top:0" width="70" height="900" viewBox="65 0 70 900"><rect x="89.6" y="110" width="21" height="24.4" fill="#fbfbfb" stroke="#1c1c1c" stroke-width="1.3"/><path d="M90.4 134 L110 134 L110 111 Z" fill="#d8d8d8" opacity=".5"/><path d="M92.4 112.6 L101 112.6" stroke="#222" stroke-width="1"/><path d="M95 114.6 L108 114.6" stroke="#222" stroke-width="1"/><path d="M95 116.6 L100 116.6" stroke="#222" stroke-width="1"/><path d="M92 118.4 L93.4 118.4" stroke="#222" stroke-width="1"/><path d="M92.4 121.4 L100 121.4" stroke="#222" stroke-width="1"/><path d="M95 123.4 L100 123.4" stroke="#222" stroke-width="1"/><path d="M92.4 126.4 L95.4 126.4" stroke="#222" stroke-width="1"/><path d="M95 128.4 L105 128.4" stroke="#222" stroke-width="1"/><path d="M95 130.4 L100.6 130.4" stroke="#222" stroke-width="1"/><path d="M95 132.2 L100.6 132.2" stroke="#222" stroke-width="1"/></svg>
<svg style="left:65px;top:0" width="70" height="900" viewBox="65 0 70 900"><path d="M87.6 166 L92.4 161.4 L112 181.4 L107.2 186Z" fill="#b2b2b2" stroke="#8f8f8f" stroke-width=".5"/>
<path d="M91.4 167.2 L93.4 165.2 M94 169.8 L96 167.8 M96.6 172.4 L98.6 170.4 M99.2 175 L100.6 173.6" stroke="#808080" stroke-width=".7"/>
<path d="M113 161.6 Q105.6 168 98.8 178.4 L96.2 182 Q93 186.4 87.6 185.8 Q91.4 184.4 92.2 180.8 L94.8 178 Q103.6 167 113 161.6Z" fill="#454545"/>
<path d="M113 161.6 Q105.6 167.6 99.6 177 L97.6 175.4 Q104.8 166.6 113 161.6Z" fill="#6c6c6c"/>
<path d="M96.2 182 Q93 186.4 87.6 185.8 Q91.4 184.4 92.2 180.8Z" fill="#383838"/></svg>
<svg style="left:65px;top:0" width="70" height="900" viewBox="65 0 70 900"><g stroke="#2a3042" stroke-width=".9" fill="none"><path d="M90 229 L86.6 231.4 M92.6 232.4 L90.4 235.6 M97.6 234 L97 237.4 M103 234.6 L104 238 M110.6 228 L114.6 230.6"/></g>
<ellipse cx="98.6" cy="223.4" rx="11.8" ry="10.6" transform="rotate(20 98.6 223.4)" fill="url(#mBug)" stroke="#33446e" stroke-width=".9"/>
<path d="M94.6 214.4 Q103 219 105.6 230.6" stroke="#4a5c8c" stroke-width=".8" fill="none"/>
<path d="M101 231.6 Q102 225.6 107.6 225.6 Q112.4 226.6 112 232 Q109 235 104.6 234.6 Q101.6 234 101 231.6Z" fill="#232a3c"/>
<path d="M104 230 Q105 227 108.4 227.4" stroke="#5c6a8c" stroke-width=".8" fill="none"/></svg>
<svg style="left:65px;top:0" width="70" height="900" viewBox="65 0 70 900"><path d="M92 266 L95 264.6 L107.6 269.6 L107.6 288 L104 289.6 L92 284.6Z" fill="#1e2c55"/>
<path d="M105 270.4 L107 269.6 L107 287.4 L105 288.6Z" fill="#fff"/><path d="M103 271.4 L105 270.4 L105 288.6 L103 289.4Z" fill="#e9ecf6"/>
<path d="M92.4 266.6 L94.6 265.6 L103.4 270.2 Q103 277 100.6 281 L100.6 289.4 L92.4 284.2Z" fill="url(#mFold)" stroke="#27386a" stroke-width=".7"/>
<path d="M100.6 281 Q102.6 279 103.4 276 L103.4 289.6 L100.6 289.4Z" fill="#fbfbfe" stroke="#27386a" stroke-width=".5"/></svg>
<svg style="left:65px;top:0" width="70" height="900" viewBox="65 0 70 900"><path d="M84.4 315 L86.4 312.6 L108.6 312.6 L110.2 315 L110.2 331 L84.4 331Z" fill="#d9822d"/>
<path d="M84.4 315 L86.4 312.6 L108.6 312.6 L110.2 315Z" fill="#eda055"/>
<path d="M84.4 331 L110.2 331 L110.2 344 Q110.2 345 109.2 345 L85.4 345 Q84.4 345 84.4 344Z" fill="#c9cbc2"/>
<path d="M84.4 331 L110.2 331 L110.2 333 L84.4 333Z" fill="#e4e5de"/>
<circle cx="105.4" cy="334.8" r="12.2" fill="url(#mCd)" stroke="#aebccb" stroke-width=".6"/>
<path d="M105.4 334.8 L102 323.6 L108 323.2Z M105.4 334.8 L109 346 L103 346.2Z" fill="#9db8ea" opacity=".5"/>
<path d="M105.4 334.8 L94 332 L94.4 338Z M105.4 334.8 L117 331.6 L117 337Z" fill="#f0c0c0" opacity=".5"/>
<circle cx="105.4" cy="334.8" r="4.2" fill="#e4e4e4" stroke="#cfcfcf" stroke-width=".6"/><circle cx="105.4" cy="334.8" r="1.9" fill="#bdbdbd"/></svg>
<svg style="left:65px;top:0" width="70" height="900" viewBox="65 0 70 900"><rect x="86" y="370" width="28" height="24.2" rx="2" fill="url(#mMon)" stroke="#8c8c8c" stroke-width=".6"/>
<rect x="88.4" y="372.2" width="23.2" height="17.6" rx="1.2" fill="#16191c"/>
<path d="M88.6 372.4 L101 372.4 Q96 378 94.6 389.6 L88.6 389.6Z" fill="#fff" opacity=".10"/><path d="M91.6 373 L91.6 389" stroke="#2c8aa8" stroke-width=".5" opacity=".8"/><path d="M96.2 373 L96.2 389" stroke="#2c8aa8" stroke-width=".5" opacity=".8"/><path d="M100.8 373 L100.8 389" stroke="#2c8aa8" stroke-width=".5" opacity=".8"/><path d="M105.4 373 L105.4 389" stroke="#2c8aa8" stroke-width=".5" opacity=".8"/><path d="M110 373 L110 389" stroke="#2c8aa8" stroke-width=".5" opacity=".8"/><path d="M89 375.4 L111 375.4" stroke="#2c8aa8" stroke-width=".5" opacity=".8"/><path d="M89 380 L111 380" stroke="#2c8aa8" stroke-width=".5" opacity=".8"/><path d="M89 384.6 L111 384.6" stroke="#2c8aa8" stroke-width=".5" opacity=".8"/><path d="M89 388.8 L111 388.8" stroke="#2c8aa8" stroke-width=".5" opacity=".8"/><circle cx="89.6" cy="392" r=".7" fill="#555"/><circle cx="106.6" cy="392" r=".6" fill="#555"/><circle cx="108.6" cy="392" r=".6" fill="#555"/><circle cx="110.6" cy="392" r=".6" fill="#555"/></svg>
<svg style="left:65px;top:0" width="70" height="900" viewBox="65 0 70 900"><circle cx="100" cy="433.8" r="11.3" fill="url(#mHelp)" stroke="#27376a" stroke-width="1"/>
<path d="M89.4 436 Q95 446 107 443 Q112 440 111 432 Q104 438 89.4 436Z" fill="#5a70b0" opacity=".5"/>
<path d="M95.8 430.4 Q96.2 426.4 100.2 426.4 Q104.4 426.6 104.2 430 Q104 432.2 101.6 433.6 Q100 434.8 100 436.8" fill="none" stroke="#fff" stroke-width="2.2"/>
<circle cx="100" cy="440.4" r="1.4" fill="#fff"/>
<path d="M95.8 430.4 Q96.2 426.4 100.2 426.4 Q104.4 426.6 104.2 430 Q104 432.2 101.6 433.6 Q100 434.8 100 436.8" fill="none" stroke="#4a5a90" stroke-width=".5" transform="translate(.9 .9)" opacity=".6"/></svg>
<svg style="left:65px;top:0" width="70" height="900" viewBox="65 0 70 900"><path d="M86 500 L86 480 Q86 472 94 472 L114 472 L114 500Z" fill="url(#mPh)"/>
<path d="M86.6 500 L86.6 480 Q86.6 472.8 94 472.8 L114 472.8" fill="none" stroke="#d6d6d6" stroke-width="1"/>
<rect x="107" y="477" width="7" height="1.6" rx=".8" fill="#4a4a4a"/>
<rect x="90" y="486.8" width="24" height="3.2" fill="#050505"/><rect x="91.4" y="487.8" width="8" height="1.2" fill="#8a8a8a" opacity=".8"/>
<rect x="90" y="490" width="24" height="10" fill="#7e1c3c"/><path d="M90 490 L114 490 L114 494 L90 496Z" fill="#a03054" opacity=".5"/>
<path d="M92.4 492.6 L92.4 497.4 M95.6 492.6 L95.6 497.4 M92.4 495 L95.6 495" stroke="#d8a8b8" stroke-width=".7"/><rect x="97" y="494" width="9" height="3.2" fill="#d8a8b8" opacity=".45"/></svg>
<span class="t" style="left:78.60px;top:85.67px;font-size:11.5px;font-weight:700;color:#fff;letter-spacing:-1.069px;text-shadow:0 1px 1px rgba(0,0,0,.55),0 0 2px rgba(0,0,0,.35);">Welcome</span>
<span class="t" style="left:90.75px;top:137.67px;font-size:11.5px;font-weight:700;color:#1a1a2a;letter-spacing:-0.809px;text-shadow:0 1px 0 rgba(255,255,255,.5);">Edit</span>
<span class="t" style="left:83.90px;top:189.67px;font-size:11.5px;font-weight:700;color:#9d9d9d;letter-spacing:-1.024px;text-shadow:0 1px 0 rgba(0,0,0,.25);">Design</span>
<span class="t" style="left:84.90px;top:241.67px;font-size:11.5px;font-weight:700;color:#fff;letter-spacing:-1.116px;text-shadow:0 1px 1px rgba(0,0,0,.55),0 0 2px rgba(0,0,0,.35);">Debug</span>
<span class="t" style="left:80.30px;top:293.67px;font-size:11.5px;font-weight:700;color:#fff;letter-spacing:-0.749px;text-shadow:0 1px 1px rgba(0,0,0,.55),0 0 2px rgba(0,0,0,.35);">Projects</span>
<span class="t" style="left:82.55px;top:345.67px;font-size:11.5px;font-weight:700;color:#fff;letter-spacing:-0.947px;text-shadow:0 1px 1px rgba(0,0,0,.55),0 0 2px rgba(0,0,0,.35);">Publish</span>
<span class="t" style="left:81.35px;top:397.67px;font-size:11.5px;font-weight:700;color:#fff;letter-spacing:-0.881px;text-shadow:0 1px 1px rgba(0,0,0,.55),0 0 2px rgba(0,0,0,.35);">Analyze</span>
<span class="t" style="left:89.00px;top:449.67px;font-size:11.5px;font-weight:700;color:#fff;letter-spacing:-0.730px;text-shadow:0 1px 1px rgba(0,0,0,.55),0 0 2px rgba(0,0,0,.35);">Help</span>
<span class="t" style="left:82.05px;top:501.67px;font-size:11.5px;font-weight:700;color:#fff;letter-spacing:-1.083px;text-shadow:0 1px 1px rgba(0,0,0,.55),0 0 2px rgba(0,0,0,.35);">Devices</span>
<div class="abs" style="left:65px;top:688px;width:70px;height:1px;background:#3a3a3a;box-shadow:0 1px 0 rgba(255,255,255,.16);"></div>
<span class="t" style="left:82.40px;top:695.87px;font-size:11.5px;font-weight:400;color:#fff;letter-spacing:-0.237px;text-shadow:0 1px 1px rgba(0,0,0,.55),0 0 2px rgba(0,0,0,.35);">untitled</span>
<svg style="left:65px;top:0" width="70" height="900" viewBox="65 0 70 900"><rect x="85" y="713" width="30" height="22.4" rx="1.6" fill="url(#mMon)" stroke="#8f8f8f" stroke-width=".6"/>
<rect x="88.2" y="716" width="23.6" height="16" fill="url(#mScr)" stroke="#5a1a5c" stroke-width=".6"/>
<path d="M88.4 716.2 L111.6 716.2 L111.6 721 Q100 722 88.4 726Z" fill="#fff" opacity=".13"/>
<path d="M96 735.4 L104 735.4 L104.6 737.4 L95.4 737.4Z" fill="#cfcfcf"/>
<path d="M89.6 737.4 L110.4 737.4 L113.4 742 Q113.6 743 112.6 743 L87.4 743 Q86.4 743 86.6 742Z" fill="#e9e9e9" stroke="#9a9a9a" stroke-width=".5"/>
<path d="M91 738.6 L109 738.6 L110.6 741 L89.4 741Z" fill="#333"/>
<path d="M121 730 L125 733.8 L121 737.6Z" fill="#e6e6e6"/></svg>
<span class="t" style="left:82.25px;top:749.27px;font-size:11.5px;font-weight:700;color:#fff;letter-spacing:-0.498px;text-shadow:0 1px 1px rgba(0,0,0,.55),0 0 2px rgba(0,0,0,.35);">Default</span>
<svg style="left:65px;top:0" width="70" height="900" viewBox="65 0 70 900"><path d="M89.8 786.6 L111 797.6 L89.8 808.4Z" fill="url(#mRun)" stroke="#2f8a0a" stroke-width=".6"/>
<path d="M90.4 787.8 L108 797 L90.4 797Z" fill="#fff" opacity=".18"/>
<path d="M89.8 824.8 L111 835.8 L89.8 846.8Z" fill="url(#mRun)" stroke="#2f8a0a" stroke-width=".6"/>
<path d="M90.4 826 L108 835.2 L90.4 835.2Z" fill="#fff" opacity=".18"/>
<g stroke="#2a3042" stroke-width=".8" fill="none"><path d="M96 845 L94.6 847.6 M100 847 L100 849.6 M107.6 843 L110 845 M106 846 L107.6 848.6"/></g>
<ellipse cx="101" cy="840.6" rx="7.2" ry="6.2" transform="rotate(15 101 840.6)" fill="url(#mBug)" stroke="#33446e" stroke-width=".7"/>
<path d="M103 846 Q103.6 842 107 842.4 Q109.6 843.4 108.6 846.4 Q106 848 103 846Z" fill="#232a3c"/>
<path d="M87.6 880.8 L105.4 862.8 L108.6 866 L90.6 883.8Z" fill="#c87a2c" stroke="#8a4a12" stroke-width=".5"/>
<path d="M88.6 881 L105.6 864" stroke="#e8a45c" stroke-width=".8"/>
<path d="M97.4 863 Q102 860.6 105 863 L112.6 868.6 L109.4 872.4 L106.6 869.6 Q104.6 866.6 101.6 864.6Z" fill="#2a2a2a"/>
<path d="M98.4 862.6 Q102 861.2 104.6 863.2" stroke="#9a9a9a" stroke-width=".8" fill="none"/></svg>
<div class="tb" style="left:65px;width:1375px;"></div>
<div class="abs" style="left:65px;top:24px;width:1375px;height:22px;background:linear-gradient(90deg,rgba(0,0,0,.14) 0,rgba(0,0,0,.0) 12%,rgba(255,255,255,.0) 25%,rgba(255,255,255,.12) 45%,rgba(255,255,255,.12) 62%,rgba(255,255,255,.02) 82%,rgba(0,0,0,.10) 100%);"></div>
<div class="abs" style="left:467px;top:45px;width:973px;height:2px;background:linear-gradient(#5e5e5e,#555);"></div>
<div class="abs" style="left:135px;top:24px;width:1px;height:23px;background:#2b2b2b;"></div>
<div class="abs" style="left:465px;top:24px;width:1px;height:23px;background:#2b2b2b;"></div>
<div class="abs" style="left:136px;top:48px;width:329px;height:542px;background:#fff;"></div>
<div class="abs" style="left:136px;top:615px;width:329px;height:259px;background:#fff;"></div>
<div class="abs" style="left:135px;top:47px;width:1px;height:853px;background:#2b2b2b;"></div>
<div class="abs" style="left:465px;top:47px;width:1px;height:828px;background:#2b2b2b;"></div>
<span class="t" style="left:142.30px;top:28.88px;font-size:15.5px;font-weight:400;color:#ffffff;letter-spacing:-0.125px;text-shadow:0 1px 0 rgba(0,0,0,.45);">Projects</span>
<svg style="left:351.5px;top:30px" width="8" height="12" viewBox="0 0 8 12"><path d="M0.2 5 L4 0.7 L7.8 5Z M0.2 7 L4 11.3 L7.8 7Z" fill="#e8e8e8"/></svg>
<div class="tbsep" style="left:363.5px;"></div>
<svg style="left:372px;top:30px" width="16" height="13" viewBox="0 0 16 13" fill="none" stroke="#ececec" stroke-width="1.3">
<path d="M1.6 1.9 L10.4 1.9 L7.2 6.6 L7.2 10.6 L4.8 10.6 L4.8 6.6Z"/><path d="M9.4 8.7 L14.2 8.7 L11.8 11.5Z" fill="#ececec" stroke="none"/></svg>
<div class="abs" style="left:393px;top:25px;width:22px;height:21px;background:rgba(0,0,0,.22);box-shadow:inset 1px 0 0 rgba(0,0,0,.25);"></div>
<svg style="left:396px;top:30px" width="16" height="12" viewBox="0 0 16 12" fill="none" stroke="#ececec" stroke-width="1.25">
<ellipse cx="6.4" cy="4.4" rx="5.2" ry="3.2" transform="rotate(-6 6.4 4.4)"/><ellipse cx="9.4" cy="7.4" rx="5.2" ry="3.2" transform="rotate(-6 9.4 7.4)"/></svg>
<svg style="left:421.6px;top:29.8px" width="16" height="12" viewBox="0 0 16 12" fill="none" stroke="#ececec" stroke-width="1.1">
<rect x="1.6" y="1.5" width="7" height="10"/><path d="M1.6 6.6 L8.6 6.6"/><path d="M9.9 6.4 L15.1 6.4 M12.5 3.8 L12.5 9" stroke-width="1.25"/></svg>
<svg style="left:448.6px;top:33px" width="12" height="10" viewBox="0 0 12 10"><rect x="0.6" y="0.6" width="10.6" height="8" fill="none" stroke="#ececec" stroke-width="1.1"/><rect x="0.1" y="7.4" width="11.6" height="1.9" fill="#ececec"/><path d="M3.6 5.4 L5.9 2.6 L8.2 5.4Z" fill="#ececec"/></svg>
<svg width="0" height="0" style="left:0;top:0"><defs><linearGradient id="fg" x1="0" y1="0" x2="0" y2="1"><stop offset="0" stop-color="#f3a676"/><stop offset=".45" stop-color="#ea6a2c"/><stop offset="1" stop-color="#cc4d14"/></linearGradient><linearGradient id="flg" x1="0" y1="0" x2="0" y2="1"><stop offset="0" stop-color="#f6f6f6"/><stop offset="1" stop-color="#dedede"/></linearGradient></defs></svg>
<svg style="left:144.10000000000002px;top:54.1px" width="7" height="8" viewBox="0 0 7 8"><path d="M0.6 0.6 L0.6 7.2 L6.2 3.9Z" fill="#9a9a9a" stroke="#505050" stroke-width=".8"/></svg>
<svg style="left:157px;top:50.2px" width="17" height="15" viewBox="0 0 17 15">
<path d="M0.5 1.6 Q0.5 0.5 1.6 0.5 L5.6 0.5 Q6.6 0.5 7 1.3 L7.5 2.3 L13 2.3 Q14 2.3 14 3.3 L14 13.2 L0.5 13.2Z" fill="#fbfaf9" stroke="#aaa7a1" stroke-width=".9"/>
<rect x="2.3" y="3.7" width="13.4" height="10.2" rx=".9" fill="url(#fg)" stroke="#c0501e" stroke-width=".7"/>
<path d="M3 4.5 L15.5 4.5" stroke="#f8c3a2" stroke-width=".8"/></svg>
<span class="t" style="left:179.30px;top:50.08px;font-size:15.5px;font-weight:400;color:#3c3c3c;letter-spacing:-0.124px;">NuovoApp</span>
<svg style="left:143.8px;top:73.2px" width="8" height="7" viewBox="0 0 8 7"><path d="M0.6 0.6 L7.4 0.6 L4 6.2Z" fill="#8e8e8e" stroke="#505050" stroke-width=".8"/></svg>
<svg style="left:157px;top:69.2px" width="17" height="15" viewBox="0 0 17 15">
<path d="M0.5 1.6 Q0.5 0.5 1.6 0.5 L5.6 0.5 Q6.6 0.5 7 1.3 L7.5 2.3 L13 2.3 Q14 2.3 14 3.3 L14 13.2 L0.5 13.2Z" fill="#fbfaf9" stroke="#aaa7a1" stroke-width=".9"/>
<rect x="2.3" y="3.7" width="13.4" height="10.2" rx=".9" fill="url(#fg)" stroke="#c0501e" stroke-width=".7"/>
<path d="M3 4.5 L15.5 4.5" stroke="#f8c3a2" stroke-width=".8"/></svg>
<span class="t" style="left:179.30px;top:69.08px;font-size:15.5px;font-weight:700;color:#3c3c3c;letter-spacing:0.091px;">untitled</span>
<svg style="left:162.10000000000002px;top:92.10000000000001px" width="7" height="8" viewBox="0 0 7 8"><path d="M0.6 0.6 L0.6 7.2 L6.2 3.9Z" fill="#9a9a9a" stroke="#505050" stroke-width=".8"/></svg>
<svg style="left:175px;top:88.2px" width="17" height="15" viewBox="0 0 17 15">
<path d="M0.5 1.6 Q0.5 0.5 1.6 0.5 L5.6 0.5 Q6.6 0.5 7 1.3 L7.5 2.3 L13 2.3 Q14 2.3 14 3.3 L14 13.2 L0.5 13.2Z" fill="#fbfaf9" stroke="#aaa7a1" stroke-width=".9"/>
<rect x="2.3" y="3.7" width="13.4" height="10.2" rx=".9" fill="url(#fg)" stroke="#c0501e" stroke-width=".7"/>
<path d="M3 4.5 L15.5 4.5" stroke="#f8c3a2" stroke-width=".8"/></svg>
<span class="t" style="left:197.30px;top:88.08px;font-size:15.5px;font-weight:400;color:#3c3c3c;letter-spacing:-0.007px;">tests</span>
<svg style="left:161.8px;top:111.2px" width="8" height="7" viewBox="0 0 8 7"><path d="M0.6 0.6 L7.4 0.6 L4 6.2Z" fill="#8e8e8e" stroke="#505050" stroke-width=".8"/></svg>
<svg style="left:175px;top:107.2px" width="17" height="15" viewBox="0 0 17 15">
<path d="M0.5 1.6 Q0.5 0.5 1.6 0.5 L5.6 0.5 Q6.6 0.5 7 1.3 L7.5 2.3 L13 2.3 Q14 2.3 14 3.3 L14 13.2 L0.5 13.2Z" fill="#fbfaf9" stroke="#aaa7a1" stroke-width=".9"/>
<rect x="2.3" y="3.7" width="13.4" height="10.2" rx=".9" fill="url(#fg)" stroke="#c0501e" stroke-width=".7"/>
<path d="M3 4.5 L15.5 4.5" stroke="#f8c3a2" stroke-width=".8"/></svg>
<span class="t" style="left:197.30px;top:107.08px;font-size:15.5px;font-weight:400;color:#3c3c3c;letter-spacing:0.269px;">www</span>
<svg style="left:180.10000000000002px;top:130.1px" width="7" height="8" viewBox="0 0 7 8"><path d="M0.6 0.6 L0.6 7.2 L6.2 3.9Z" fill="#9a9a9a" stroke="#505050" stroke-width=".8"/></svg>
<svg style="left:193px;top:126.2px" width="17" height="15" viewBox="0 0 17 15">
<path d="M0.5 1.6 Q0.5 0.5 1.6 0.5 L5.6 0.5 Q6.6 0.5 7 1.3 L7.5 2.3 L13 2.3 Q14 2.3 14 3.3 L14 13.2 L0.5 13.2Z" fill="#fbfaf9" stroke="#aaa7a1" stroke-width=".9"/>
<rect x="2.3" y="3.7" width="13.4" height="10.2" rx=".9" fill="url(#fg)" stroke="#c0501e" stroke-width=".7"/>
<path d="M3 4.5 L15.5 4.5" stroke="#f8c3a2" stroke-width=".8"/></svg>
<span class="t" style="left:215.30px;top:126.08px;font-size:15.5px;font-weight:400;color:#3c3c3c;letter-spacing:-1.317px;">css</span>
<svg style="left:180.10000000000002px;top:149.1px" width="7" height="8" viewBox="0 0 7 8"><path d="M0.6 0.6 L0.6 7.2 L6.2 3.9Z" fill="#9a9a9a" stroke="#505050" stroke-width=".8"/></svg>
<svg style="left:193px;top:145.2px" width="17" height="15" viewBox="0 0 17 15">
<path d="M0.5 1.6 Q0.5 0.5 1.6 0.5 L5.6 0.5 Q6.6 0.5 7 1.3 L7.5 2.3 L13 2.3 Q14 2.3 14 3.3 L14 13.2 L0.5 13.2Z" fill="#fbfaf9" stroke="#aaa7a1" stroke-width=".9"/>
<rect x="2.3" y="3.7" width="13.4" height="10.2" rx=".9" fill="url(#fg)" stroke="#c0501e" stroke-width=".7"/>
<path d="M3 4.5 L15.5 4.5" stroke="#f8c3a2" stroke-width=".8"/></svg>
<span class="t" style="left:215.30px;top:145.08px;font-size:15.5px;font-weight:400;color:#3c3c3c;letter-spacing:-0.461px;">img</span>
<svg style="left:180.10000000000002px;top:168.1px" width="7" height="8" viewBox="0 0 7 8"><path d="M0.6 0.6 L0.6 7.2 L6.2 3.9Z" fill="#9a9a9a" stroke="#505050" stroke-width=".8"/></svg>
<svg style="left:193px;top:164.2px" width="17" height="15" viewBox="0 0 17 15">
<path d="M0.5 1.6 Q0.5 0.5 1.6 0.5 L5.6 0.5 Q6.6 0.5 7 1.3 L7.5 2.3 L13 2.3 Q14 2.3 14 3.3 L14 13.2 L0.5 13.2Z" fill="#fbfaf9" stroke="#aaa7a1" stroke-width=".9"/>
<rect x="2.3" y="3.7" width="13.4" height="10.2" rx=".9" fill="url(#fg)" stroke="#c0501e" stroke-width=".7"/>
<path d="M3 4.5 L15.5 4.5" stroke="#f8c3a2" stroke-width=".8"/></svg>
<span class="t" style="left:215.30px;top:164.08px;font-size:15.5px;font-weight:400;color:#3c3c3c;letter-spacing:-0.802px;">js</span>
<div class="abs" style="left:136px;top:181px;width:329px;height:19px;background:#f07746;"></div>
<svg style="left:193.8px;top:182.2px" width="14" height="16" viewBox="0 0 14 16">
<path d="M0.5 0.5 L8.8 0.5 L13.3 5 L13.3 15 L0.5 15Z" fill="#f4d2c4" stroke="#d59a82" stroke-width=".9"/>
<path d="M8.8 0.5 L8.8 5 L13.3 5" fill="#fff" fill-opacity=".55" stroke="#d59a82" stroke-width=".9"/></svg>
<span class="t" style="left:215.30px;top:183.08px;font-size:15.5px;font-weight:400;color:#fff;letter-spacing:0.094px;">index.html</span>
<svg style="left:175.8px;top:201.2px" width="14" height="16" viewBox="0 0 14 16">
<path d="M0.5 0.5 L8.8 0.5 L13.3 5 L13.3 15 L0.5 15Z" fill="url(#flg)" stroke="#8f8f8c" stroke-width=".9"/>
<path d="M8.8 0.5 L8.8 5 L13.3 5" fill="#fff" fill-opacity=".55" stroke="#8f8f8c" stroke-width=".9"/></svg>
<span class="t" style="left:197.30px;top:202.08px;font-size:15.5px;font-weight:400;color:#3c3c3c;letter-spacing:-0.309px;">.excludes</span>
<svg style="left:175.8px;top:220.2px" width="14" height="16" viewBox="0 0 14 16">
<path d="M0.5 0.5 L8.8 0.5 L13.3 5 L13.3 15 L0.5 15Z" fill="url(#flg)" stroke="#8f8f8c" stroke-width=".9"/>
<path d="M8.8 0.5 L8.8 5 L13.3 5" fill="#fff" fill-opacity=".55" stroke="#8f8f8c" stroke-width=".9"/></svg>
<span class="t" style="left:197.30px;top:221.08px;font-size:15.5px;font-weight:400;color:#3c3c3c;letter-spacing:0.051px;">Gruntfile.js</span>
<svg style="left:175.8px;top:239.2px" width="14" height="16" viewBox="0 0 14 16">
<path d="M0.5 0.5 L8.8 0.5 L13.3 5 L13.3 15 L0.5 15Z" fill="url(#flg)" stroke="#8f8f8c" stroke-width=".9"/>
<path d="M8.8 0.5 L8.8 5 L13.3 5" fill="#fff" fill-opacity=".55" stroke="#8f8f8c" stroke-width=".9"/></svg>
<span class="t" style="left:197.30px;top:240.08px;font-size:15.5px;font-weight:400;color:#3c3c3c;letter-spacing:-0.025px;">manifest.json</span>
<svg style="left:175.8px;top:258.2px" width="14" height="16" viewBox="0 0 14 16">
<path d="M0.5 0.5 L8.8 0.5 L13.3 5 L13.3 15 L0.5 15Z" fill="url(#flg)" stroke="#8f8f8c" stroke-width=".9"/>
<path d="M8.8 0.5 L8.8 5 L13.3 5" fill="#fff" fill-opacity=".55" stroke="#8f8f8c" stroke-width=".9"/></svg>
<span class="t" style="left:197.30px;top:259.08px;font-size:15.5px;font-weight:400;color:#3c3c3c;letter-spacing:-0.362px;">package.json</span>
<svg style="left:175.8px;top:277.2px" width="14" height="16" viewBox="0 0 14 16">
<path d="M0.5 0.5 L8.8 0.5 L13.3 5 L13.3 15 L0.5 15Z" fill="url(#flg)" stroke="#8f8f8c" stroke-width=".9"/>
<path d="M8.8 0.5 L8.8 5 L13.3 5" fill="#fff" fill-opacity=".55" stroke="#8f8f8c" stroke-width=".9"/></svg>
<span class="t" style="left:197.30px;top:278.08px;font-size:15.5px;font-weight:400;color:#3c3c3c;letter-spacing:-1.155px;">README</span>
<svg style="left:175.8px;top:296.2px" width="14" height="16" viewBox="0 0 14 16">
<path d="M0.5 0.5 L8.8 0.5 L13.3 5 L13.3 15 L0.5 15Z" fill="url(#flg)" stroke="#8f8f8c" stroke-width=".9"/>
<path d="M8.8 0.5 L8.8 5 L13.3 5" fill="#fff" fill-opacity=".55" stroke="#8f8f8c" stroke-width=".9"/></svg>
<span class="t" style="left:197.30px;top:297.08px;font-size:15.5px;font-weight:400;color:#3c3c3c;letter-spacing:0.181px;">untitled.apparmor</span>
<svg style="left:175.8px;top:315.2px" width="14" height="16" viewBox="0 0 14 16">
<path d="M0.5 0.5 L8.8 0.5 L13.3 5 L13.3 15 L0.5 15Z" fill="url(#flg)" stroke="#8f8f8c" stroke-width=".9"/>
<path d="M8.8 0.5 L8.8 5 L13.3 5" fill="#fff" fill-opacity=".55" stroke="#8f8f8c" stroke-width=".9"/></svg>
<span class="t" style="left:197.30px;top:316.08px;font-size:15.5px;font-weight:400;color:#3c3c3c;letter-spacing:0.214px;">untitled.desktop</span>
<svg style="left:175.8px;top:334.2px" width="14" height="16" viewBox="0 0 14 16">
<path d="M0.5 0.5 L8.8 0.5 L13.3 5 L13.3 15 L0.5 15Z" fill="url(#flg)" stroke="#8f8f8c" stroke-width=".9"/>
<path d="M8.8 0.5 L8.8 5 L13.3 5" fill="#fff" fill-opacity=".55" stroke="#8f8f8c" stroke-width=".9"/></svg>
<span class="t" style="left:197.30px;top:335.08px;font-size:15.5px;font-weight:400;color:#3c3c3c;letter-spacing:0.270px;">untitled.png</span>
<div class="abs" style="left:136px;top:590px;width:329px;height:1px;background:#262626;"></div><div class="tb" style="left:136px;top:591px;width:329px;"></div>
<div class="abs" style="left:136px;top:591px;width:329px;height:22px;background:linear-gradient(90deg,rgba(0,0,0,.08) 0,rgba(0,0,0,0) 60%,rgba(255,255,255,.04) 100%);"></div>
<span class="t" style="left:142.30px;top:595.88px;font-size:15.5px;font-weight:400;color:#ffffff;letter-spacing:-0.209px;text-shadow:0 1px 0 rgba(0,0,0,.45);">Open Documents</span>
<svg style="left:401.5px;top:597px" width="8" height="12" viewBox="0 0 8 12"><path d="M0.2 5 L4 0.7 L7.8 5Z M0.2 7 L4 11.3 L7.8 7Z" fill="#e8e8e8"/></svg>
<div class="tbsep" style="left:413.5px;top:592px;"></div>
<svg style="left:421.6px;top:596.8px" width="16" height="12" viewBox="0 0 16 12" fill="none" stroke="#ececec" stroke-width="1.1">
<rect x="1.6" y="1.5" width="7" height="10"/><path d="M1.6 6.6 L8.6 6.6"/><path d="M9.9 6.4 L15.1 6.4 M12.5 3.8 L12.5 9" stroke-width="1.25"/></svg>
<svg style="left:448.6px;top:599.6px" width="12" height="10" viewBox="0 0 12 10"><rect x="0.6" y="0.9" width="10.6" height="8" fill="none" stroke="#ececec" stroke-width="1.1"/><rect x="0.1" y="0.4" width="11.6" height="1.9" fill="#ececec"/><path d="M3.6 4.4 L5.9 7.2 L8.2 4.4Z" fill="#ececec"/></svg>
<div class="abs" style="left:136px;top:634px;width:329px;height:19px;background:linear-gradient(#e9e9e9,#dcdcdc);"></div>
<span class="t" style="left:139.30px;top:617.08px;font-size:15.5px;font-weight:400;color:#3c3c3c;letter-spacing:0.207px;">NuovoApp/www/index.html</span>
<span class="t" style="left:139.30px;top:636.08px;font-size:15.5px;font-weight:400;color:#3c3c3c;letter-spacing:0.442px;">untitled/www/index.html</span>
<span class="t" style="left:139.30px;top:655.08px;font-size:15.5px;font-weight:400;color:#3c3c3c;letter-spacing:-0.025px;">manifest.json</span>
<svg style="left:472.0px;top:30px" width="11" height="12" viewBox="0 0 11 12"><path d="M0.6 6 L6 0.7 L6 3.6 L10.4 3.6 L10.4 8.4 L6 8.4 L6 11.3Z" fill="#ffc41f" stroke="#c98a00" stroke-width=".7"/></svg>
<svg style="left:493.0px;top:30px" width="11" height="12" viewBox="0 0 11 12"><path transform="translate(11 0) scale(-1 1)" d="M0.6 6 L6 0.7 L6 3.6 L10.4 3.6 L10.4 8.4 L6 8.4 L6 11.3Z" fill="#c9c9c9" stroke="#8d8d8d" stroke-width=".7"/></svg>
<svg style="left:515px;top:28px" width="15" height="16" viewBox="0 0 15 16"><path d="M7.4 7.6 L7.4 4.6 A2.7 2.7 0 0 1 12.8 4.6 L12.8 6" fill="none" stroke="#7d7d7d" stroke-width="1.5"/><rect x="0.6" y="7.4" width="9.4" height="7.4" rx=".8" fill="#7f7f7f"/><path d="M6.2 9.6 L4 11.1 L6.2 12.6" fill="none" stroke="#5c5c5c" stroke-width="1.1"/></svg>
<svg style="left:538.5px;top:28px" width="15" height="17" viewBox="0 0 15 17"><path d="M0.5 0.5 L8.8 0.5 L13.6 5.3 L13.6 16 L0.5 16Z" fill="#f1f1f1"/><path d="M8.8 0.5 L8.8 5.3 L13.6 5.3Z" fill="#c9c9c9"/><path d="M0.5 12 L13.6 12 L13.6 16 L0.5 16Z" fill="#e2e2e2"/></svg>
<span class="t" style="left:566.20px;top:28.88px;font-size:15.5px;font-weight:400;color:#fff;letter-spacing:0.455px;text-shadow:0 1px 0 rgba(0,0,0,.45);">untitled/www/index.html</span>
<svg style="left:769.5px;top:30px" width="8" height="12" viewBox="0 0 8 12"><path d="M0.2 5 L4 0.7 L7.8 5Z M0.2 7 L4 11.3 L7.8 7Z" fill="#e8e8e8"/></svg>
<div class="tbsep" style="left:782px;"></div>
<svg style="left:788px;top:31px" width="11" height="11" viewBox="0 0 11 11"><path d="M0.7 0.7 L10.3 10.3 M10.3 0.7 L0.7 10.3" stroke="#e4e4e4" stroke-width="1.3"/></svg>
<div class="tbsep" style="left:804px;"></div>
<span class="t" style="left:1288.00px;top:28.88px;font-size:15.5px;font-weight:400;color:#fff;letter-spacing:-0.517px;text-shadow:0 1px 0 rgba(0,0,0,.45);">Line: 31, Col: 5</span>
<svg style="left:1418.6px;top:29.8px" width="16" height="12" viewBox="0 0 16 12" fill="none" stroke="#ececec" stroke-width="1.1">
<rect x="1.6" y="1.5" width="7" height="10"/><path d="M1.6 6.6 L8.6 6.6"/><path d="M9.9 6.4 L15.1 6.4 M12.5 3.8 L12.5 9" stroke-width="1.25"/></svg>
<div class="abs" style="left:467px;top:47px;width:960px;height:814px;background:#1e1e27;"></div>
<div class="abs" style="left:466px;top:47px;width:66px;height:814px;background:#2e2e2e;"></div>
<div class="abs" style="left:532px;top:622px;width:895px;height:19px;background:#2b2b33;"></div>
<div id="code" class="abs" style="left:467px;top:47px;width:960px;height:814px;overflow:hidden;">
<div class="ln" style="top:5px;">1</div>
<div class="cl" style="top:5px;"><span style="color:#ff8bff;font-weight:bold">&lt;!DOCTYPE</span><span style="color:#cfbfad"> html</span><span style="color:#ff8bff;font-weight:bold">&gt;</span></div>
<div class="ln" style="top:24px;">2</div>
<div class="cl" style="top:24px;"><span style="color:#808bed">&lt;html&gt;</span></div>
<div class="ln" style="top:43px;">3</div>
<div class="cl" style="top:43px;"><span style="color:#808bed">&lt;head&gt;</span></div>
<div class="ln" style="top:62px;">4</div>
<div class="cl" style="top:62px;">    <span style="color:#808bed">&lt;meta</span><span style="color:#cfbfad"> charset=</span><span class="s">"utf-8"</span><span style="color:#808bed">&gt;</span></div>
<div class="ln" style="top:81px;">5</div>
<div class="cl" style="top:81px;">    <span style="color:#808bed">&lt;title&gt;</span><span style="color:#cfbfad">An Ubuntu HTML5 application</span><span style="color:#808bed">&lt;/title&gt;</span></div>
<div class="ln" style="top:100px;">6</div>
<div class="cl" style="top:100px;">    <span style="color:#808bed">&lt;meta</span><span style="color:#cfbfad"> name=</span><span class="s">"description"</span><span style="color:#cfbfad"> content=</span><span class="s">"An</span> <span class="s">Ubuntu</span> <span class="s">HTML5</span> <span class="s">application"</span><span style="color:#808bed">&gt;</span></div>
<div class="ln" style="top:119px;">7</div>
<div class="cl" style="top:119px;">    <span style="color:#808bed">&lt;meta</span><span style="color:#cfbfad"> name=</span><span class="s">"viewport"</span><span style="color:#cfbfad"> content=</span><span class="s">"width=device-width,</span> <span class="s">initial-scale=1,</span> <span class="s">maximum-scale=1,</span> <span class="s">user-scalable=0"</span><span style="color:#808bed">&gt;</span></div>
<div class="ln" style="top:138px;">8</div>
<div class="ln" style="top:157px;">9</div>
<svg style="left:51px;top:164px" width="9" height="7" viewBox="0 0 9 7"><path d="M1 0.9 L8 0.9 L4.5 6Z" fill="#7c7c7c" stroke="#e2e2e2" stroke-width="1"/></svg>
<div class="cl" style="top:157px;">    <span style="color:#cd8b00">&lt;!--</span></div>
<div class="ln" style="top:176px;">10</div>
<div class="cl" style="top:176px;"><span style="color:#cd8b00">         Application stylesheets</span></div>
<div class="ln" style="top:195px;">11</div>
<div class="cl" style="top:195px;"><span style="color:#cd8b00">         Include your own stylesheets below to style your application.</span></div>
<div class="ln" style="top:214px;">12</div>
<div class="cl" style="top:214px;"><span style="color:#cd8b00">      --&gt;</span></div>
<div class="ln" style="top:233px;">13</div>
<div class="cl" style="top:233px;">    <span style="color:#808bed">&lt;link</span><span style="color:#cfbfad"> rel=</span><span class="s">"stylesheet"</span><span style="color:#cfbfad"> href=</span><span class="s">"css/app.css"</span><span style="color:#cfbfad"> type=</span><span class="s">"text/css"</span> <span style="color:#808bed">/&gt;</span></div>
<div class="ln" style="top:252px;">14</div>
<div class="ln" style="top:271px;">15</div>
<svg style="left:51px;top:278px" width="9" height="7" viewBox="0 0 9 7"><path d="M1 0.9 L8 0.9 L4.5 6Z" fill="#7c7c7c" stroke="#e2e2e2" stroke-width="1"/></svg>
<div class="cl" style="top:271px;">    <span style="color:#cd8b00">&lt;!--</span></div>
<div class="ln" style="top:290px;">16</div>
<div class="cl" style="top:290px;"><span style="color:#cd8b00">        Ubuntu UI javascript imports - Ambiance theme</span></div>
<div class="ln" style="top:309px;">17</div>
<div class="cl" style="top:309px;"><span style="color:#cd8b00">        Ubuntu provides building blocks that you can use in your application. For more information, see the documentation</span></div>
<div class="ln" style="top:328px;">18</div>
<div class="cl" style="top:328px;"><span style="color:#cd8b00">     --&gt;</span></div>
<div class="ln" style="top:347px;">19</div>
<div class="cl" style="top:347px;">    <span style="color:#cd8b00">&lt;!-- Ubuntu UI Style imports - Ambiance theme --&gt;</span></div>
<div class="ln" style="top:366px;">20</div>
<div class="cl" style="top:366px;">    <span style="color:#808bed">&lt;link</span><span style="color:#cfbfad"> href=</span><span class="s">"/usr/share/ubuntu-html5-ui-toolkit/0.1/ambiance/css/appTemplate.css"</span><span style="color:#cfbfad"> rel=</span><span class="s">"stylesheet"</span><span style="color:#cfbfad"> type=</span><span class="s">"text/css"</span> <span style="color:#808bed">/&gt;</span></div>
<div class="ln" style="top:385px;">21</div>
<div class="ln" style="top:404px;">22</div>
<div class="cl" style="top:404px;">    <span style="color:#808bed">&lt;script</span><span style="color:#cfbfad"> src=</span><span class="s">"/usr/share/ubuntu-html5-ui-toolkit/0.1/ambiance/js/fast-buttons.js"</span><span style="color:#808bed">&gt;&lt;/script&gt;</span></div>
<div class="ln" style="top:423px;">23</div>
<div class="cl" style="top:423px;">    <span style="color:#808bed">&lt;script</span><span style="color:#cfbfad"> src=</span><span class="s">"/usr/share/ubuntu-html5-ui-toolkit/0.1/ambiance/js/core.js"</span><span style="color:#808bed">&gt;&lt;/script&gt;</span></div>
<div class="ln" style="top:442px;">24</div>
<div class="cl" style="top:442px;">    <span style="color:#808bed">&lt;script</span><span style="color:#cfbfad"> src=</span><span class="s">"/usr/share/ubuntu-html5-ui-toolkit/0.1/ambiance/js/buttons.js"</span><span style="color:#808bed">&gt;&lt;/script&gt;</span></div>
<div class="ln" style="top:461px;">25</div>
<div class="cl" style="top:461px;">    <span style="color:#808bed">&lt;script</span><span style="color:#cfbfad"> src=</span><span class="s">"/usr/share/ubuntu-html5-ui-toolkit/0.1/ambiance/js/dialogs.js"</span><span style="color:#808bed">&gt;&lt;/script&gt;</span></div>
<div class="ln" style="top:480px;">26</div>
<div class="cl" style="top:480px;">    <span style="color:#808bed">&lt;script</span><span style="color:#cfbfad"> src=</span><span class="s">"/usr/share/ubuntu-html5-ui-toolkit/0.1/ambiance/js/page.js"</span><span style="color:#808bed">&gt;&lt;/script&gt;</span></div>
<div class="ln" style="top:499px;">27</div>
<div class="cl" style="top:499px;">    <span style="color:#808bed">&lt;script</span><span style="color:#cfbfad"> src=</span><span class="s">"/usr/share/ubuntu-html5-ui-toolkit/0.1/ambiance/js/pagestacks.js"</span><span style="color:#808bed">&gt;&lt;/script&gt;</span></div>
<div class="ln" style="top:518px;">28</div>
<div class="cl" style="top:518px;">    <span style="color:#808bed">&lt;script</span><span style="color:#cfbfad"> src=</span><span class="s">"/usr/share/ubuntu-html5-ui-toolkit/0.1/ambiance/js/tab.js"</span><span style="color:#808bed">&gt;&lt;/script&gt;</span></div>
<div class="ln" style="top:537px;">29</div>
<div class="cl" style="top:537px;">    <span style="color:#808bed">&lt;script</span><span style="color:#cfbfad"> src=</span><span class="s">"/usr/share/ubuntu-html5-ui-toolkit/0.1/ambiance/js/tabs.js"</span><span style="color:#808bed">&gt;&lt;/script&gt;</span></div>
<div class="ln" style="top:556px;">30</div>
<div class="cl" style="top:556px;"><span style="color:#808bed">&lt;/head&gt;</span></div>
<div class="ln" style="top:575px;font-weight:bold;color:#b0b0f0;">31</div>
<div class="cl" style="top:575px;"><span style="color:#808bed">&lt;body&gt;</span></div>
<div class="ln" style="top:594px;">32</div>
<div class="ln" style="top:613px;">33</div>
<svg style="left:51px;top:620px" width="9" height="7" viewBox="0 0 9 7"><path d="M1 0.9 L8 0.9 L4.5 6Z" fill="#7c7c7c" stroke="#e2e2e2" stroke-width="1"/></svg>
<div class="cl" style="top:613px;">    <span style="color:#808bed">&lt;div</span><span style="color:#cfbfad"> data-role=</span><span class="s">"mainview"</span><span style="color:#808bed">&gt;</span></div>
<div class="ln" style="top:632px;">34</div>
<div class="ln" style="top:651px;">35</div>
<svg style="left:51px;top:658px" width="9" height="7" viewBox="0 0 9 7"><path d="M1 0.9 L8 0.9 L4.5 6Z" fill="#7c7c7c" stroke="#e2e2e2" stroke-width="1"/></svg>
<div class="cl" style="top:651px;">        <span style="color:#808bed">&lt;header</span><span style="color:#cfbfad"> data-role=</span><span class="s">"header"</span><span style="color:#808bed">&gt;</span></div>
<div class="ln" style="top:670px;">36</div>
<svg style="left:51px;top:677px" width="9" height="7" viewBox="0 0 9 7"><path d="M1 0.9 L8 0.9 L4.5 6Z" fill="#7c7c7c" stroke="#e2e2e2" stroke-width="1"/></svg>
<div class="cl" style="top:670px;">            <span style="color:#808bed">&lt;ul</span><span style="color:#cfbfad"> data-role=</span><span class="s">"tabs"</span><span style="color:#808bed">&gt;</span></div>
<div class="ln" style="top:689px;">37</div>
<div class="cl" style="top:689px;">                <span style="color:#808bed">&lt;li</span><span style="color:#cfbfad"> data-role=</span><span class="s">"tabitem"</span><span style="color:#cfbfad"> data-page=</span><span class="s">"hello-page"</span><span style="color:#808bed">&gt;</span><span style="color:#cfbfad">Project Title</span><span style="color:#808bed">&lt;/li&gt;</span></div>
<div class="ln" style="top:708px;">38</div>
<div class="cl" style="top:708px;">            <span style="color:#808bed">&lt;/ul&gt;</span></div>
<div class="ln" style="top:727px;">39</div>
<div class="cl" style="top:727px;">        <span style="color:#808bed">&lt;/header&gt;</span></div>
<div class="ln" style="top:746px;">40</div>
<div class="ln" style="top:765px;">41</div>
<svg style="left:51px;top:772px" width="9" height="7" viewBox="0 0 9 7"><path d="M1 0.9 L8 0.9 L4.5 6Z" fill="#7c7c7c" stroke="#e2e2e2" stroke-width="1"/></svg>
<div class="cl" style="top:765px;">        <span style="color:#808bed">&lt;div</span><span style="color:#cfbfad"> data-role=</span><span class="s">"content"</span><span style="color:#808bed">&gt;</span></div>
<div class="ln" style="top:784px;">42</div>
<div class="ln" style="top:803px;">43</div>
<div class="cl" style="top:803px;">            <span style="color:#cd8b00">&lt;!-- The application main page --&gt;</span></div>
</div>
<div class="abs" style="left:1427px;top:47px;width:13px;height:1px;background:#4a4a4a;"></div>
<div class="abs" style="left:1427px;top:48px;width:13px;height:826px;background:linear-gradient(90deg,#f4f4f3 0,#f4f4f3 94%,#b9b7b3 100%);"></div>
<div class="abs" style="left:1427.3px;top:48.5px;width:12.3px;height:30px;border-radius:6px;border:1px solid #c9c7c4;border-bottom:none;box-sizing:border-box;"></div>
<div class="abs" style="left:1427.3px;top:580px;width:12.3px;height:267.5px;border-radius:0 0 6px 6px;background:linear-gradient(90deg,#d6d5d3,#e4e3e1 50%,#dddcda);border:1px solid #c4c2bf;border-top:none;box-sizing:border-box;"></div>
<div class="abs" style="left:1427.3px;top:835px;width:12.3px;height:25.6px;border-radius:0 0 6px 6px;border:1px solid #c9c7c4;border-top:none;box-sizing:border-box;"></div>
<div class="abs" style="left:1427.3px;top:61px;width:12.3px;height:532.3px;border-radius:6px;background:linear-gradient(90deg,#fdfdfd,#f7f7f6 60%,#eeeeec);border:1px solid #a9a7a3;box-sizing:border-box;"></div>
<svg style="left:1431.4px;top:54.6px" width="4" height="3" viewBox="0 0 4 3"><path d="M0 2.8 L2 0.2 L4 2.8Z" fill="#b4b2ae"/></svg>
<svg style="left:1431px;top:851.4px" width="6" height="4" viewBox="0 0 6 4"><path d="M0 0.2 L3 3.8 L6 0.2Z" fill="#5a5a5a"/></svg>
<div class="abs" style="left:1431px;top:323px;width:5px;height:1px;background:#9a9894;box-shadow:0 2px 0 #9a9894,0 4px 0 #9a9894;"></div>
<div class="abs" style="left:1430px;top:445px;width:10px;height:3px;background:#222;"></div>
<div class="abs" style="left:466px;top:861px;width:974px;height:13px;background:linear-gradient(#d9d9d9 0,#f4f4f3 14%,#f4f4f3 100%);"></div>
<div class="abs" style="left:466.5px;top:861.7px;width:30px;height:11.8px;border-radius:6px;border:1px solid #c9c7c4;border-right:none;box-sizing:border-box;"></div>
<div class="abs" style="left:980px;top:861.7px;width:433px;height:11.8px;border-radius:0 6px 6px 0;background:linear-gradient(#d6d5d3,#e4e3e1 50%,#dddcda);border:1px solid #c4c2bf;border-left:none;box-sizing:border-box;"></div>
<div class="abs" style="left:1400px;top:861.7px;width:26.5px;height:11.8px;border-radius:0 6px 6px 0;border:1px solid #c9c7c4;border-left:none;box-sizing:border-box;"></div>
<div class="abs" style="left:479px;top:861.7px;width:511.5px;height:11.8px;border-radius:6px;background:linear-gradient(#fdfdfd,#f7f7f6 60%,#eeeeec);border:1px solid #a9a7a3;box-sizing:border-box;"></div>
<svg style="left:471.4px;top:865.6px" width="3" height="4" viewBox="0 0 3 4"><path d="M2.8 0 L0.2 2 L2.8 4Z" fill="#b4b2ae"/></svg>
<svg style="left:1418.6px;top:864.6px" width="4" height="6" viewBox="0 0 4 6"><path d="M0.2 0 L3.8 3 L0.2 6Z" fill="#5a5a5a"/></svg>
<div class="abs" style="left:731px;top:865px;width:1px;height:5px;background:#9a9894;box-shadow:2px 0 0 #9a9894,4px 0 0 #9a9894;"></div>
<div class="abs" style="left:136px;top:874px;width:1304px;height:26px;background:linear-gradient(#262626 0,#262626 7%,#4d4d4d 10%,#484848 100%);"></div>
<div class="abs" style="left:137px;top:876px;width:24px;height:24px;background:rgba(0,0,0,.12);"></div>
<svg style="left:143px;top:880px" width="13" height="13" viewBox="0 0 13 13"><rect x="0.8" y="0.8" width="11.4" height="11.4" fill="#2a2a2a" stroke="#ececec" stroke-width="1.6"/><rect x="1.4" y="1.4" width="4.6" height="10.2" fill="#ececec"/></svg>
<div class="abs" style="left:167px;top:878px;width:198px;height:19px;border-radius:3px;background:#fff;box-shadow:0 0 0 1px #262626;"></div>
<svg style="left:172px;top:881px" width="18" height="13" viewBox="0 0 18 13"><circle cx="7.2" cy="4.8" r="3.3" fill="none" stroke="#555" stroke-width="1.5"/><path d="M4.8 7.4 L1.2 11.6" stroke="#555" stroke-width="1.8" stroke-linecap="round"/><path d="M12.2 6.2 L17 6.2 L14.6 9Z" fill="#555"/></svg>
<span class="t" style="left:195.50px;top:879.88px;font-size:15.5px;font-weight:400;color:#a5a5a5;letter-spacing:0.013px;">Type to locate (Ctr...</span>
<div class="abs" style="left:369px;top:877px;width:1px;height:21px;background:#2a2a2a;box-shadow:1px 0 0 rgba(255,255,255,.13);"></div>
<div class="abs" style="left:376px;top:878.5px;width:17px;height:18px;border-radius:3px 0 0 3px;background:linear-gradient(#707070,#5c5c5c);box-shadow:0 0 0 1px #2b2b2b;"></div>
<div class="abs" style="left:393px;top:878.5px;width:47px;height:18px;border-radius:0 3px 3px 0;background:linear-gradient(#dadada,#c4c4c4);box-shadow:0 0 0 1px #2b2b2b;"></div>
<span class="t" style="left:380.19px;top:879.88px;font-size:15.5px;font-weight:400;color:#e6e6e6;letter-spacing:0.000px;">1</span>
<span class="t" style="left:397.60px;top:879.88px;font-size:15.5px;font-weight:400;color:#1a1a1a;letter-spacing:-0.935px;">Issues</span>
<div class="abs" style="left:446px;top:878.5px;width:17px;height:18px;border-radius:3px 0 0 3px;background:linear-gradient(#707070,#5c5c5c);box-shadow:0 0 0 1px #2b2b2b;"></div>
<div class="abs" style="left:463px;top:878.5px;width:104px;height:18px;border-radius:0 3px 3px 0;background:linear-gradient(#dadada,#c4c4c4);box-shadow:0 0 0 1px #2b2b2b;"></div>
<span class="t" style="left:450.19px;top:879.88px;font-size:15.5px;font-weight:400;color:#e6e6e6;letter-spacing:0.000px;">2</span>
<span class="t" style="left:467.60px;top:879.88px;font-size:15.5px;font-weight:400;color:#1a1a1a;letter-spacing:-0.701px;">Search Results</span>
<div class="abs" style="left:573px;top:878.5px;width:17px;height:18px;border-radius:3px 0 0 3px;background:linear-gradient(#707070,#5c5c5c);box-shadow:0 0 0 1px #2b2b2b;"></div>
<div class="abs" style="left:590px;top:878.5px;width:135px;height:18px;border-radius:0 3px 3px 0;background:linear-gradient(#dadada,#c4c4c4);box-shadow:0 0 0 1px #2b2b2b;"></div>
<span class="t" style="left:577.19px;top:879.88px;font-size:15.5px;font-weight:400;color:#e6e6e6;letter-spacing:0.000px;">3</span>
<span class="t" style="left:594.60px;top:879.88px;font-size:15.5px;font-weight:400;color:#1a1a1a;letter-spacing:-0.015px;">Application Output</span>
<div class="abs" style="left:731.5px;top:878.5px;width:16.5px;height:18px;border-radius:3px 0 0 3px;background:linear-gradient(#707070,#5c5c5c);box-shadow:0 0 0 1px #2b2b2b;"></div>
<div class="abs" style="left:748px;top:878.5px;width:115px;height:18px;border-radius:0 3px 3px 0;background:linear-gradient(#dadada,#c4c4c4);box-shadow:0 0 0 1px #2b2b2b;"></div>
<span class="t" style="left:735.44px;top:879.88px;font-size:15.5px;font-weight:400;color:#e6e6e6;letter-spacing:0.000px;">4</span>
<span class="t" style="left:752.60px;top:879.88px;font-size:15.5px;font-weight:400;color:#1a1a1a;letter-spacing:-0.093px;">Compile Output</span>
<div class="abs" style="left:869.5px;top:878.5px;width:16.5px;height:18px;border-radius:3px 0 0 3px;background:linear-gradient(#707070,#5c5c5c);box-shadow:0 0 0 1px #2b2b2b;"></div>
<div class="abs" style="left:886px;top:878.5px;width:116px;height:18px;border-radius:0 3px 3px 0;background:linear-gradient(#dadada,#c4c4c4);box-shadow:0 0 0 1px #2b2b2b;"></div>
<span class="t" style="left:873.44px;top:879.88px;font-size:15.5px;font-weight:400;color:#e6e6e6;letter-spacing:0.000px;">5</span>
<span class="t" style="left:890.60px;top:879.88px;font-size:15.5px;font-weight:400;color:#1a1a1a;letter-spacing:-0.727px;">QML/JS Console</span>
<div class="abs" style="left:1008px;top:878.5px;width:17px;height:18px;border-radius:3px 0 0 3px;background:linear-gradient(#707070,#5c5c5c);box-shadow:0 0 0 1px #2b2b2b;"></div>
<div class="abs" style="left:1025px;top:878.5px;width:128px;height:18px;border-radius:0 3px 3px 0;background:linear-gradient(#dadada,#c4c4c4);box-shadow:0 0 0 1px #2b2b2b;"></div>
<span class="t" style="left:1012.19px;top:879.88px;font-size:15.5px;font-weight:400;color:#e6e6e6;letter-spacing:0.000px;">6</span>
<span class="t" style="left:1029.60px;top:879.88px;font-size:15.5px;font-weight:400;color:#1a1a1a;letter-spacing:-0.662px;">General Messages</span>
<div class="abs" style="left:1159.5px;top:878.5px;width:16px;height:18px;border-radius:3px;background:linear-gradient(#666,#585858);box-shadow:0 0 0 1px #2b2b2b, inset 0 0 0 1px rgba(255,255,255,.12);"></div>
<svg style="left:1163.5px;top:881px" width="8" height="13" viewBox="0 0 8 13"><path d="M0.4 5.2 L4 0.9 L7.6 5.2Z M0.4 7.8 L4 12.1 L7.6 7.8Z" fill="#f0f0f0"/></svg>
<div class="abs" style="left:1426.5px;top:877px;width:13.5px;height:21px;background:#3b3b3b;"></div>
<svg style="left:1429.4px;top:883.6px" width="7" height="5" viewBox="0 0 7 5"><path d="M0.2 4.8 L3.5 0.4 L6.8 4.8Z" fill="#f2f2f2"/></svg>
<svg style="left:0;top:0" width="1440" height="900"><path d="M368.0 91.2 L449.0 91.2 L449.0 81.3 L531.0 101.0 L449.0 120.7 L449.0 110.8 L368.0 110.8Z" fill="none" stroke="#ed1c24" stroke-width="4.4" stroke-linejoin="miter" stroke-miterlimit="3"/><circle cx="531" cy="101" r="2.2" fill="#ed1c24"/></svg>
<svg style="left:0;top:0" width="1440" height="900"><path d="M367.1 623.2 L449.6 623.2 L449.6 613.3 L532.2 633.0 L449.6 652.7 L449.6 642.8 L367.1 642.8Z" fill="none" stroke="#ed1c24" stroke-width="4.4" stroke-linejoin="miter" stroke-miterlimit="3"/><circle cx="532.2" cy="633" r="2.2" fill="#ed1c24"/></svg>
<span class="t" style="left:290.50px;top:89.93px;font-size:23px;font-weight:700;color:#ed1c24;letter-spacing:-0.793px;">HEAD</span>
<span class="t" style="left:348.50px;top:659.73px;font-size:23px;font-weight:700;color:#ed1c24;letter-spacing:-0.863px;">BODY</span>
</body></html>
